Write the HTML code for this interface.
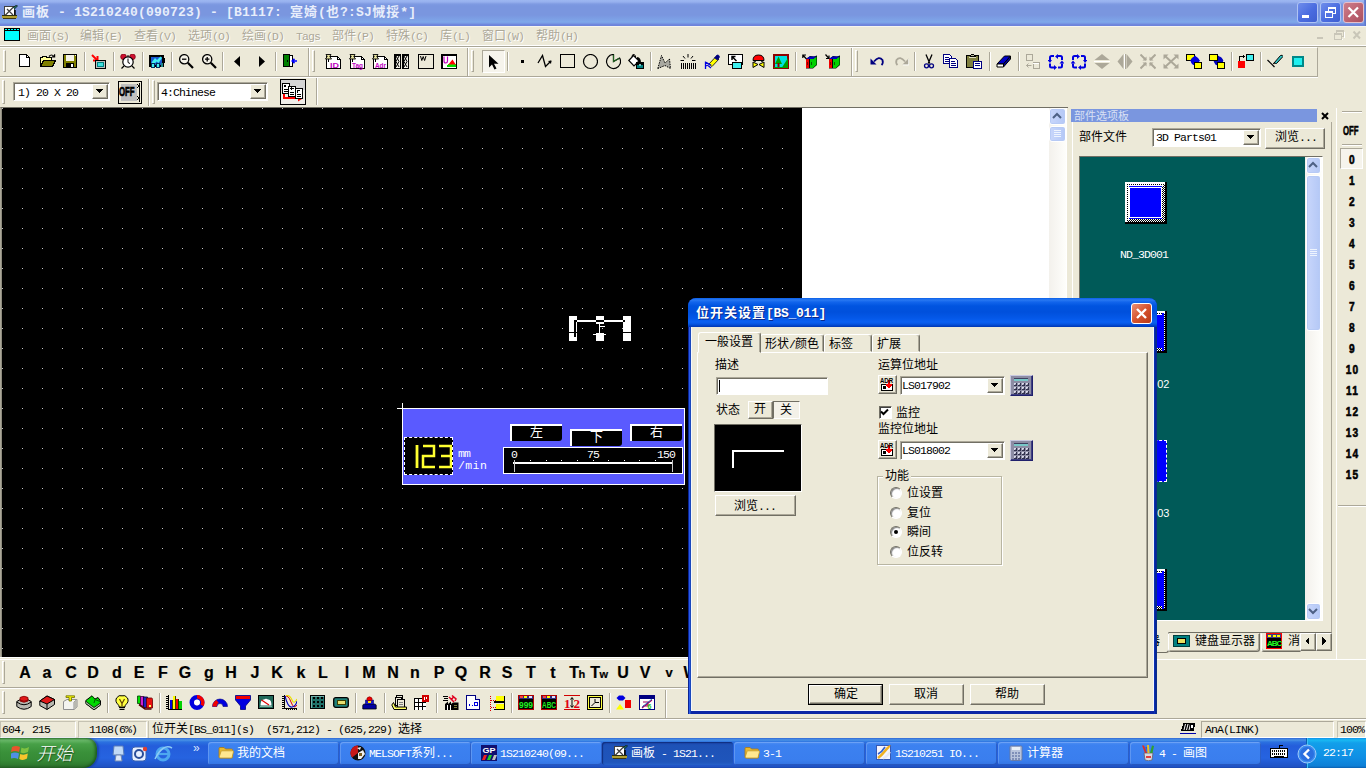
<!DOCTYPE html>
<html lang="zh"><head><meta charset="utf-8"><title>画板</title>
<style>
html,body{margin:0;padding:0}
body{width:1366px;height:768px;overflow:hidden;background:#ECE9D8;position:relative;font-family:"Liberation Mono","Noto Sans CJK SC",sans-serif;font-size:12px;color:#000}
.a{position:absolute;box-sizing:border-box}
.t{white-space:pre;line-height:14px;font-size:12px}
.l{font-family:"Liberation Mono",monospace;font-size:11.5px;letter-spacing:-0.9px}
.b{font-weight:bold}
.gray{color:#ACA899}
.btn{background:#ECE9D8;border:1px solid;border-color:#fff #716F64 #716F64 #fff;box-shadow:inset -1px -1px 0 #ACA899}
.sunk{border:1px solid;border-color:#ACA899 #fff #fff #ACA899;box-shadow:inset 1px 1px 0 #716F64;background:#fff}
.sep{width:2px;border-left:1px solid #ACA899;border-right:1px solid #fff}
.hsep{height:2px;border-top:1px solid #ACA899;border-bottom:1px solid #fff}
.ttl{letter-spacing:1px}
.ttl .l{font-size:13px;letter-spacing:0.2px}
.sans{font-family:"Liberation Sans","Noto Sans CJK SC",sans-serif}
.minl .l{letter-spacing:0.4px}
.ttl2 .l{font-size:13px;letter-spacing:-0.3px}

</style></head>
<body>
<div class="a " style="left:0px;top:0px;width:1366px;height:26px;background:linear-gradient(to bottom,#9DB7F1 0,#96B0EE 2px,#7F9BE2 4px,#7A96DF 6px,#7A96DF 15px,#7DA2E7 20px,#7EA8EA 22px,#7A9EE6 23px,#7088DD 24.5px,#6C82DA 26px)"></div>
<div class="a t ttl" style="left:22px;top:6px;color:#E8EEFB;font-size:13px;font-weight:bold;">画板<span class="l"> - 1S210240(090723) - [B1117: </span>寔婍<span class="l">(</span>也<span class="l">?:SJ</span>悈挼<span class="l">*]</span></div>
<svg class="a" style="left:2px;top:5px" width="16" height="16" viewBox="0 0 16 16" shape-rendering="crispEdges"><rect x="2.5" y="1.5" width="10" height="9" fill="#fff" stroke="#404040" stroke-width="1"/><g shape-rendering="auto"><path d="M3 10.5 L12 1.5 M5 4 L11 10" fill="none" stroke="#404040" stroke-width="1.2" /><path d="M11 2.5 L14.5 0 L15.5 1 L12.5 4" fill="#207060" stroke="#000" stroke-width="0.6" /><path d="M13 5 V10" fill="none" stroke="#000" stroke-width="1.4" /></g><rect x="0" y="11" width="15" height="2" fill="#B0A030"/><rect x="1" y="13" width="13" height="1" fill="#403810"/><rect x="0" y="10" width="15" height="1" fill="#303010"/></svg>
<div class="a " style="left:0px;top:26px;width:1366px;height:21px;background:#ECE9D8;border-top:1px solid #F6F5EE"></div>
<div class="a " style="left:0px;top:45px;width:1366px;height:1px;background:#fff"></div>
<div class="a " style="left:0px;top:46px;width:1366px;height:1px;background:#A9A696"></div>
<div class="a t " style="left:27px;top:30px;color:#ACA899;text-shadow:1px 1px 0 #fff">画面<span class="l">(S)</span></div>
<div class="a t " style="left:80px;top:30px;color:#ACA899;text-shadow:1px 1px 0 #fff">编辑<span class="l">(E)</span></div>
<div class="a t " style="left:134px;top:30px;color:#ACA899;text-shadow:1px 1px 0 #fff">查看<span class="l">(V)</span></div>
<div class="a t " style="left:188px;top:30px;color:#ACA899;text-shadow:1px 1px 0 #fff">选项<span class="l">(O)</span></div>
<div class="a t " style="left:242px;top:30px;color:#ACA899;text-shadow:1px 1px 0 #fff">绘画<span class="l">(D)</span></div>
<div class="a t " style="left:296px;top:30px;color:#ACA899;text-shadow:1px 1px 0 #fff"><span class="l">Tags</span></div>
<div class="a t " style="left:332px;top:30px;color:#ACA899;text-shadow:1px 1px 0 #fff">部件<span class="l">(P)</span></div>
<div class="a t " style="left:386px;top:30px;color:#ACA899;text-shadow:1px 1px 0 #fff">特殊<span class="l">(C)</span></div>
<div class="a t " style="left:440px;top:30px;color:#ACA899;text-shadow:1px 1px 0 #fff">库<span class="l">(L)</span></div>
<div class="a t " style="left:482px;top:30px;color:#ACA899;text-shadow:1px 1px 0 #fff">窗口<span class="l">(W)</span></div>
<div class="a t " style="left:536px;top:30px;color:#ACA899;text-shadow:1px 1px 0 #fff">帮助<span class="l">(H)</span></div>
<svg class="a" style="left:4px;top:28px" width="18" height="16" viewBox="0 0 18 16" shape-rendering="crispEdges" ><rect x="0" y="0" width="16" height="13" fill="#000"/><rect x="1" y="3" width="14" height="9" fill="#00FFFF"/><rect x="1" y="1" width="2" height="1" fill="#00FFFF"/><rect x="4" y="1" width="2" height="1" fill="#00FFFF"/><rect x="7" y="1" width="2" height="1" fill="#00FFFF"/><rect x="10" y="1" width="2" height="1" fill="#00FFFF"/><rect x="13" y="1" width="2" height="1" fill="#00FFFF"/></svg>
<svg class="a" style="left:1316px;top:36px" width="8" height="4" viewBox="0 0 8 4" shape-rendering="crispEdges" ><rect x="1" y="1" width="6" height="2" fill="#C9C6B8"/></svg>
<svg class="a" style="left:1333px;top:29px" width="12" height="11" viewBox="0 0 12 11" shape-rendering="crispEdges" ><rect x="3.5" y="1.5" width="7" height="6" fill="none" stroke="#C9C6B8" stroke-width="1"/><rect x="3" y="1" width="8" height="2" fill="#C9C6B8"/><rect x="1.5" y="4.5" width="7" height="6" fill="#ECE9D8" stroke="#C9C6B8" stroke-width="1"/><rect x="1" y="4" width="8" height="2" fill="#C9C6B8"/><rect x="11" y="3" width="1" height="6" fill="#fff"/><rect x="9" y="10" width="1" height="1" fill="#fff"/></svg>
<svg class="a" style="left:1352px;top:30px" width="10" height="10" viewBox="0 0 10 10" shape-rendering="crispEdges" ><path d="M1.5 1.5 L8 8.5 M8 1.5 L1.5 8.5" stroke="#C9C6B8" stroke-width="2" fill="none" shape-rendering="auto"/></svg>
<div class="a" style="left:1297px;top:2px;width:21px;height:21px;border:1px solid #AFC3F4;border-radius:3px;background:linear-gradient(135deg,#6F8DEB,#4A6CE0 55%,#3F5FD0)"></div>
<svg class="a" style="left:1297px;top:2px" width="21" height="21" viewBox="0 0 21 21" shape-rendering="crispEdges" ><rect x="5" y="13" width="7" height="3" fill="#fff"/></svg>
<div class="a" style="left:1320px;top:2px;width:21px;height:21px;border:1px solid #AFC3F4;border-radius:3px;background:linear-gradient(135deg,#6F8DEB,#4A6CE0 55%,#3F5FD0)"></div>
<svg class="a" style="left:1320px;top:2px" width="21" height="21" viewBox="0 0 21 21" shape-rendering="crispEdges" ><rect x="8.5" y="5.5" width="7" height="6" fill="none" stroke="#fff" stroke-width="1"/><rect x="8" y="5" width="8" height="2" fill="#fff"/><rect x="5.5" y="9.5" width="7" height="6" fill="#5474E2" stroke="#fff" stroke-width="1"/><rect x="5" y="9" width="8" height="2" fill="#fff"/></svg>
<div class="a" style="left:1343px;top:2px;width:21px;height:21px;border:1px solid #E6BFCB;border-radius:3px;background:linear-gradient(135deg,#CC7E8C,#BD6270 55%,#A85060)"></div>
<svg class="a" style="left:1343px;top:2px" width="21" height="21" viewBox="0 0 21 21" shape-rendering="crispEdges" ><path d="M5.5 5.5 L15 15 M15 5.5 L5.5 15" stroke="#fff" stroke-width="2.2" fill="none" shape-rendering="auto"/></svg>
<div class="a " style="left:1364px;top:0px;width:2px;height:26px;background:linear-gradient(to right,#6E8AD8,#5872C8)"></div>
<div class="a " style="left:0px;top:47px;width:1318px;height:30px;border-top:1px solid #fff;border-bottom:1px solid #ACA899;border-right:1px solid #ACA899"></div>
<div class="a " style="left:0px;top:77px;width:1318px;height:1px;background:#fff"></div>
<div class="a " style="left:3px;top:50px;width:3px;height:22px;border-left:1px solid #fff;border-top:1px solid #fff;border-right:1px solid #ACA899;border-bottom:1px solid #ACA899"></div>
<div class="a " style="left:482px;top:50px;width:23px;height:23px;border:1px solid;border-color:#ACA899 #fff #fff #ACA899;background:#F6F4EC"></div>
<svg class="a" style="left:19px;top:54px" width="16" height="16" viewBox="0 0 16 16" shape-rendering="crispEdges"><path d="M0.5 0.5 H7.5 L10.5 3.5 V12.5 H0.5 Z" fill="#fff" stroke="#000" stroke-width="1" /><path d="M7.5 0.5 V3.5 H10.5" fill="none" stroke="#000" stroke-width="1" /></svg>
<svg class="a" style="left:40px;top:54px" width="16" height="16" viewBox="0 0 16 16" shape-rendering="crispEdges"><path d="M0.5 12.5 V3.5 H2 L3 2.5 H6 L7 3.5 H11.5 V6" fill="#FFFF99" stroke="#000" stroke-width="1" /><path d="M0.5 12.5 L3.5 6.5 H15.5 L12.5 12.5 Z" fill="#808000" stroke="#000" stroke-width="1" /><g shape-rendering="auto"><path d="M9 2.5 Q11.5 -0.5 14 2.5" fill="none" stroke="#000" stroke-width="1.2" /><path d="M12 2.8 H14.6 V0.2" fill="none" stroke="#000" stroke-width="1.2" /></g></svg>
<svg class="a" style="left:63px;top:54px" width="16" height="16" viewBox="0 0 16 16" shape-rendering="crispEdges"><rect x="0.5" y="0.5" width="13" height="13" fill="#808000" stroke="#000" stroke-width="1"/><rect x="3" y="1" width="8" height="6" fill="#F4F2E8"/><rect x="3" y="9" width="8" height="4" fill="#000"/><rect x="8" y="10" width="2" height="3" fill="#fff"/><rect x="12" y="1" width="1" height="1" fill="#F4F2E8"/></svg>
<div class="a " style="left:84px;top:52px;width:2px;height:19px;border-left:1px solid #ACA899;border-right:1px solid #fff"></div>
<svg class="a" style="left:90px;top:54px" width="16" height="16" viewBox="0 0 16 16" shape-rendering="crispEdges"><g shape-rendering="auto"><path d="M2 1 L7 6" fill="none" stroke="#F00" stroke-width="2" /><path d="M3 6.5 H7.5 V2" fill="none" stroke="#F00" stroke-width="2" /></g><rect x="5.5" y="6.5" width="10" height="8" fill="#C0C0C0" stroke="#000" stroke-width="1"/><rect x="7.5" y="8.5" width="6" height="4" fill="#40E0E0" stroke="#008080" stroke-width="1"/></svg>
<div class="a " style="left:113px;top:52px;width:2px;height:19px;border-left:1px solid #ACA899;border-right:1px solid #fff"></div>
<svg class="a" style="left:120px;top:54px" width="16" height="16" viewBox="0 0 16 16" shape-rendering="crispEdges"><g shape-rendering="auto"><circle cx="3.5" cy="2.8" r="2.8" fill="#D01030" stroke="#800010" stroke-width="0.8"/><circle cx="12.5" cy="2.8" r="2.8" fill="#D01030" stroke="#800010" stroke-width="0.8"/><circle cx="8" cy="8" r="5.2" fill="#fff" stroke="#000" stroke-width="1.2"/><path d="M8 4.5 V8.5 L10 9.5" fill="none" stroke="#000" stroke-width="1" /><path d="M4 12 L1.5 14.5 M12 12 L14.5 14.5" fill="none" stroke="#000" stroke-width="1.2" /><path d="M8 1 V3" fill="none" stroke="#000" stroke-width="1" /></g></svg>
<div class="a " style="left:142px;top:52px;width:2px;height:19px;border-left:1px solid #ACA899;border-right:1px solid #fff"></div>
<svg class="a" style="left:149px;top:54px" width="16" height="16" viewBox="0 0 16 16" shape-rendering="crispEdges"><rect x="0.8" y="1.8" width="13.4" height="10.4" fill="#1858D0" stroke="#000" stroke-width="1.6"/><g shape-rendering="auto"><path d="M2.5 8.5 L6 4 L8 6 L11.5 2.5 L13 4 L9.5 9 L7.5 7.5 L5 10.5 Z" fill="#40F0F0" stroke="none" stroke-width="1" /></g><rect x="2.5" y="9.5" width="3" height="4" fill="#40F0F0" stroke="#003060" stroke-width="1"/><rect x="7.5" y="9.5" width="3" height="4" fill="#40F0F0" stroke="#003060" stroke-width="1"/><rect x="12" y="9" width="2" height="4" fill="#208888"/><rect x="15" y="4" width="1" height="5" fill="#000"/></svg>
<div class="a " style="left:171px;top:52px;width:2px;height:19px;border-left:1px solid #ACA899;border-right:1px solid #fff"></div>
<svg class="a" style="left:179px;top:54px" width="16" height="16" viewBox="0 0 16 16" shape-rendering="crispEdges"><g shape-rendering="auto"><circle cx="5.2" cy="5.2" r="4.6" fill="#F4F2E8" stroke="#000" stroke-width="1.3"/><path d="M8.8 8.8 L14 14" fill="none" stroke="#000" stroke-width="2.2" /><path d="M3 5.2 H7.4" fill="none" stroke="#000" stroke-width="1.3" /></g></svg>
<svg class="a" style="left:202px;top:54px" width="16" height="16" viewBox="0 0 16 16" shape-rendering="crispEdges"><g shape-rendering="auto"><circle cx="5.2" cy="5.2" r="4.6" fill="#F4F2E8" stroke="#000" stroke-width="1.3"/><path d="M8.8 8.8 L14 14" fill="none" stroke="#000" stroke-width="2.2" /><path d="M3 5.2 H7.4 M5.2 3 V7.4" fill="none" stroke="#000" stroke-width="1.3" /></g></svg>
<div class="a " style="left:222px;top:52px;width:2px;height:19px;border-left:1px solid #ACA899;border-right:1px solid #fff"></div>
<svg class="a" style="left:229px;top:54px" width="16" height="16" viewBox="0 0 16 16" shape-rendering="crispEdges"><g shape-rendering="auto"><polygon points="5,7.5 11,2 11,13" fill="#000" stroke="none" stroke-width="1"/></g></svg>
<svg class="a" style="left:255px;top:54px" width="16" height="16" viewBox="0 0 16 16" shape-rendering="crispEdges"><g shape-rendering="auto"><polygon points="10,7.5 4,2 4,13" fill="#000" stroke="none" stroke-width="1"/></g></svg>
<div class="a " style="left:275px;top:52px;width:2px;height:19px;border-left:1px solid #ACA899;border-right:1px solid #fff"></div>
<svg class="a" style="left:282px;top:54px" width="16" height="16" viewBox="0 0 16 16" shape-rendering="crispEdges"><rect x="1.5" y="0.5" width="6" height="12" fill="#008000" stroke="#000" stroke-width="1"/><path d="M8 1.5 H10.5 V12.5 H8" fill="#fff" stroke="#000" stroke-width="1" /><rect x="5" y="6" width="1" height="2" fill="#000"/><g shape-rendering="auto"><path d="M15 7 H10.5 M12.5 4.8 L10.2 7 L12.5 9.2" fill="none" stroke="#0000FF" stroke-width="1.6" /></g></svg>
<div class="a " style="left:308px;top:48px;width:2px;height:28px;border-left:1px solid #ACA899;border-right:1px solid #fff"></div>
<div class="a " style="left:312px;top:50px;width:3px;height:22px;border-left:1px solid #fff;border-top:1px solid #fff;border-right:1px solid #ACA899;border-bottom:1px solid #ACA899"></div>
<svg class="a" style="left:325px;top:54px" width="16" height="16" viewBox="0 0 16 16" shape-rendering="crispEdges"><path d="M1.5 2.5 H12.5 L15.5 5.5 V14.5 H1.5 Z" fill="#fff" stroke="#000" stroke-width="1" /><path d="M12.5 2.5 V5.5 H15.5" fill="none" stroke="#000" stroke-width="1" /><g shape-rendering="auto"><path d="M1 0.5 H6 L4.8 2.5 L6.5 5 H0.5 L2.2 2.5 Z" fill="#E8E4A0" stroke="#000" stroke-width="0.9" /><path d="M3.5 5 V8" fill="none" stroke="#000" stroke-width="1" /></g><text x="5" y="13.5" font-family="Liberation Sans, sans-serif" font-size="8" fill="#C000C0" font-weight="bold" textLength="9" lengthAdjust="spacingAndGlyphs">ID</text></svg>
<svg class="a" style="left:349px;top:54px" width="16" height="16" viewBox="0 0 16 16" shape-rendering="crispEdges"><path d="M1.5 2.5 H12.5 L15.5 5.5 V14.5 H1.5 Z" fill="#fff" stroke="#000" stroke-width="1" /><path d="M12.5 2.5 V5.5 H15.5" fill="none" stroke="#000" stroke-width="1" /><g shape-rendering="auto"><path d="M1 0.5 H6 L4.8 2.5 L6.5 5 H0.5 L2.2 2.5 Z" fill="#E8E4A0" stroke="#000" stroke-width="0.9" /><path d="M3.5 5 V8" fill="none" stroke="#000" stroke-width="1" /></g><text x="3" y="13.5" font-family="Liberation Sans, sans-serif" font-size="7" fill="#C000C0" font-weight="bold" textLength="11" lengthAdjust="spacingAndGlyphs">Tag</text></svg>
<svg class="a" style="left:372px;top:54px" width="16" height="16" viewBox="0 0 16 16" shape-rendering="crispEdges"><path d="M1.5 2.5 H12.5 L15.5 5.5 V14.5 H1.5 Z" fill="#fff" stroke="#000" stroke-width="1" /><path d="M12.5 2.5 V5.5 H15.5" fill="none" stroke="#000" stroke-width="1" /><g shape-rendering="auto"><path d="M1 0.5 H6 L4.8 2.5 L6.5 5 H0.5 L2.2 2.5 Z" fill="#E8E4A0" stroke="#000" stroke-width="0.9" /><path d="M3.5 5 V8" fill="none" stroke="#000" stroke-width="1" /></g><text x="3" y="13.5" font-family="Liberation Sans, sans-serif" font-size="7" fill="#C000C0" font-weight="bold" textLength="11" lengthAdjust="spacingAndGlyphs">Adr</text></svg>
<svg class="a" style="left:394px;top:54px" width="16" height="16" viewBox="0 0 16 16" shape-rendering="crispEdges"><rect x="0.75" y="0.75" width="5.5" height="13.5" fill="#F4F2E8" stroke="#000" stroke-width="1.5"/><g shape-rendering="auto"><path d="M2 2 L5 7.5 L2 13 M5 2 L2 7.5 L5 13" fill="none" stroke="#000" stroke-width="1" /></g><rect x="8.75" y="0.75" width="5.5" height="13.5" fill="#F4F2E8" stroke="#000" stroke-width="1.5"/><g shape-rendering="auto"><path d="M10 2 L13 7.5 L10 13 M13 2 L10 7.5 L13 13" fill="none" stroke="#000" stroke-width="1" /></g></svg>
<svg class="a" style="left:418px;top:54px" width="16" height="16" viewBox="0 0 16 16" shape-rendering="crispEdges"><rect x="0.65" y="0.65" width="14.7" height="13.7" fill="#ECE9D8" stroke="#000" stroke-width="1.3"/><g shape-rendering="auto"><path d="M2.5 2 L3.8 6.5 L5.2 2.5 L6.6 6.5 L8 2" fill="none" stroke="#000" stroke-width="1" /></g></svg>
<svg class="a" style="left:441px;top:54px" width="16" height="16" viewBox="0 0 16 16" shape-rendering="crispEdges"><rect x="0.75" y="0.75" width="14.5" height="13.5" fill="#fff" stroke="#000" stroke-width="1.5"/><g shape-rendering="auto"><path d="M3 2.5 V7 Q3 9 4.8 9 Q6.5 9 6.5 7 V2.5" fill="none" stroke="#C000C0" stroke-width="1.2" /><polygon points="7,11 11.5,5.5 15,11" fill="#F00" stroke="none" stroke-width="1"/></g><rect x="6" y="11" width="9" height="2" fill="#00E000"/><rect x="7" y="10" width="8" height="1" fill="#808000"/></svg>
<div class="a " style="left:467px;top:48px;width:2px;height:28px;border-left:1px solid #ACA899;border-right:1px solid #fff"></div>
<div class="a " style="left:471px;top:50px;width:3px;height:22px;border-left:1px solid #fff;border-top:1px solid #fff;border-right:1px solid #ACA899;border-bottom:1px solid #ACA899"></div>
<svg class="a" style="left:485px;top:54px" width="16" height="16" viewBox="0 0 16 16" shape-rendering="crispEdges"><g shape-rendering="auto"><polygon points="4,1 4,13.5 7,10.5 9.5,15.5 11.5,14.5 9,9.8 13.5,9.8" fill="#000" stroke="none" stroke-width="1"/></g></svg>
<div class="a " style="left:507px;top:52px;width:2px;height:19px;border-left:1px solid #ACA899;border-right:1px solid #fff"></div>
<svg class="a" style="left:514px;top:54px" width="16" height="16" viewBox="0 0 16 16" shape-rendering="crispEdges"><rect x="7" y="6" width="3" height="3" fill="#000"/></svg>
<svg class="a" style="left:537px;top:54px" width="16" height="16" viewBox="0 0 16 16" shape-rendering="crispEdges"><g shape-rendering="auto"><path d="M1 9 L5.5 1.5 L8.5 12.5 L14 7" fill="none" stroke="#000" stroke-width="1.3" /><polygon points="14.5,6.5 11,7 14,10" fill="#000" stroke="none" stroke-width="1"/></g></svg>
<svg class="a" style="left:559px;top:54px" width="16" height="16" viewBox="0 0 16 16" shape-rendering="crispEdges"><rect x="1.6" y="0.6" width="13.8" height="12.8" fill="none" stroke="#000" stroke-width="1.2"/></svg>
<svg class="a" style="left:582px;top:54px" width="16" height="16" viewBox="0 0 16 16" shape-rendering="crispEdges"><g shape-rendering="auto"><circle cx="8.5" cy="7.5" r="7" fill="none" stroke="#000" stroke-width="1.2"/></g></svg>
<svg class="a" style="left:605px;top:54px" width="16" height="16" viewBox="0 0 16 16" shape-rendering="crispEdges"><g shape-rendering="auto"><path d="M8.5 7.5 L8.5 0.5 A7 7 0 1 0 14.6 4 Z" fill="none" stroke="#000" stroke-width="1.2" /><path d="M8.5 0.8 V7.5 L14.4 4.2" fill="none" stroke="#206020" stroke-width="1.2" /></g></svg>
<svg class="a" style="left:628px;top:54px" width="16" height="16" viewBox="0 0 16 16" shape-rendering="crispEdges"><g shape-rendering="auto"><path d="M0.8 6.5 L5.5 1.5 L11 7 L6 12 Z" fill="#fff" stroke="#000" stroke-width="1.2" /><path d="M4 3 Q4 0 6 0.5 Q8 1 7.5 4" fill="none" stroke="#000" stroke-width="1" /><path d="M9 4 Q12 4.5 12 9" fill="none" stroke="#000" stroke-width="2" /></g><rect x="8.5" y="8.5" width="7" height="6" fill="#008080" stroke="#000" stroke-width="1"/><rect x="9" y="8" width="6" height="3" fill="#000"/><rect x="11" y="10" width="2" height="2" fill="#70C0C0"/></svg>
<div class="a " style="left:650px;top:52px;width:2px;height:19px;border-left:1px solid #ACA899;border-right:1px solid #fff"></div>
<svg class="a" style="left:657px;top:54px" width="16" height="16" viewBox="0 0 16 16" shape-rendering="crispEdges"><g shape-rendering="auto"><path d="M0.8 14.5 L4.5 1.5 L8 9 L12.5 5 L13.5 14.5 L8 11.5 Z" fill="#A8A8A0" stroke="#000" stroke-width="1" stroke-dasharray="1.5 1"/></g></svg>
<svg class="a" style="left:680px;top:54px" width="16" height="16" viewBox="0 0 16 16" shape-rendering="crispEdges"><rect x="1" y="9" width="1" height="6" fill="#000"/><rect x="3" y="9" width="1" height="6" fill="#000"/><rect x="5" y="9" width="1" height="6" fill="#000"/><rect x="7" y="9" width="1" height="6" fill="#000"/><rect x="9" y="9" width="1" height="6" fill="#000"/><rect x="11" y="9" width="1" height="6" fill="#000"/><rect x="13" y="9" width="1" height="6" fill="#000"/><rect x="15" y="9" width="1" height="6" fill="#000"/><g shape-rendering="auto"><path d="M8 0 V3.5 M3 2 L5 4.5 M13 2 L11 4.5 M0.5 6.5 H4 M12 6.5 H15.5" fill="none" stroke="#000" stroke-width="1" /></g></svg>
<svg class="a" style="left:704px;top:54px" width="16" height="16" viewBox="0 0 16 16" shape-rendering="crispEdges"><g shape-rendering="auto"><path d="M5 10 L12 2.5 L15 5 L8 12.5 Z" fill="#FFFF00" stroke="#000" stroke-width="0.8" /><path d="M10.5 4 L13 1 Q15 0.5 15.5 3 L13.5 6 Z" fill="#000080" stroke="#000080" stroke-width="0.8" /><path d="M1.5 15 V7.5 M1.5 8 L6 10.5 L1.5 12 M4 11.5 L7 14" fill="none" stroke="#0000E0" stroke-width="1.3" /></g></svg>
<svg class="a" style="left:728px;top:54px" width="16" height="16" viewBox="0 0 16 16" shape-rendering="crispEdges"><rect x="0.7" y="0.7" width="13.6" height="9.6" fill="#fff" stroke="#000" stroke-width="1.4"/><g shape-rendering="auto"><path d="M8.5 7 L4 2.5 M4 6 V2.5 H7.5" fill="none" stroke="#000" stroke-width="1.5" /></g><rect x="4.6" y="8.6" width="8.8" height="5.8" fill="#40F0F0" stroke="#000" stroke-width="1.2"/></svg>
<svg class="a" style="left:751px;top:54px" width="16" height="16" viewBox="0 0 16 16" shape-rendering="crispEdges"><g shape-rendering="auto"><path d="M2 6.5 Q2 1 7.5 1 Q13 1 13 6.5 Z" fill="#F00" stroke="#000" stroke-width="1" /><path d="M2 8 L7 10.5 L2 13.5 Z M13 8 L8 10.5 L13 13.5 Z" fill="#FFFF00" stroke="#000" stroke-width="1" /><path d="M4 6.5 V8 M11 6.5 V8" fill="none" stroke="#000" stroke-width="1.5" /></g></svg>
<svg class="a" style="left:773px;top:54px" width="16" height="16" viewBox="0 0 16 16" shape-rendering="crispEdges"><rect x="0.8" y="0.8" width="14.4" height="13.4" fill="#00E0E0" stroke="#900000" stroke-width="1.6"/><g shape-rendering="auto"><polygon points="9,13.5 15,4 15,13.5" fill="#00A000" stroke="none" stroke-width="1"/><polygon points="2,10 5.5,2.5 9,10" fill="#00A000" stroke="none" stroke-width="1"/><rect x="4.5" y="9" width="2" height="4.5" fill="#900000"/></g><rect x="1" y="13" width="14" height="1" fill="#00A000"/></svg>
<div class="a " style="left:795px;top:52px;width:2px;height:19px;border-left:1px solid #ACA899;border-right:1px solid #fff"></div>
<svg class="a" style="left:802px;top:54px" width="16" height="16" viewBox="0 0 16 16" shape-rendering="crispEdges"><g shape-rendering="auto"><polygon points="4,5 8,2 12,2.5 15,1.5 15,11 11,14.5 4,14.5" fill="#000" stroke="none" stroke-width="1"/></g><rect x="4" y="5" width="3" height="9" fill="#F00000"/><rect x="8" y="5" width="3" height="9" fill="#00D000"/><g shape-rendering="auto"><polygon points="11,5 14.5,2.5 14.5,10.5 11,14" fill="#00D000" stroke="none" stroke-width="1"/><polygon points="4,5 7.5,2.5 14.5,2.5 11,5" fill="#0000C0" stroke="none" stroke-width="1"/></g><rect x="7" y="5" width="1" height="9" fill="#000"/><rect x="5" y="8" width="1" height="3" fill="#800000"/><rect x="9" y="8" width="1" height="3" fill="#006000"/><g shape-rendering="auto"><path d="M4.5 5 L0.8 1 M0.8 4 V1 H4" fill="none" stroke="#000" stroke-width="1.2" /></g></svg>
<svg class="a" style="left:825px;top:54px" width="16" height="16" viewBox="0 0 16 16" shape-rendering="crispEdges"><g shape-rendering="auto"><polygon points="4,5 8,2 12,2.5 15,1.5 15,11 11,14.5 4,14.5" fill="#000" stroke="none" stroke-width="1"/></g><rect x="4" y="5" width="3" height="9" fill="#F00000"/><rect x="8" y="5" width="3" height="9" fill="#00D000"/><g shape-rendering="auto"><polygon points="11,5 14.5,2.5 14.5,10.5 11,14" fill="#00D000" stroke="none" stroke-width="1"/><polygon points="4,5 7.5,2.5 14.5,2.5 11,5" fill="#0000C0" stroke="none" stroke-width="1"/></g><rect x="7" y="5" width="1" height="9" fill="#000"/><rect x="5" y="8" width="1" height="3" fill="#800000"/><rect x="9" y="8" width="1" height="3" fill="#006000"/><g shape-rendering="auto"><path d="M0.5 0.5 L4 4.5 M1 4.5 H4 V1.5" fill="none" stroke="#000" stroke-width="1.2" /></g></svg>
<div class="a " style="left:851px;top:48px;width:2px;height:28px;border-left:1px solid #ACA899;border-right:1px solid #fff"></div>
<div class="a " style="left:855px;top:50px;width:3px;height:22px;border-left:1px solid #fff;border-top:1px solid #fff;border-right:1px solid #ACA899;border-bottom:1px solid #ACA899"></div>
<svg class="a" style="left:870px;top:54px" width="16" height="16" viewBox="0 0 16 16" shape-rendering="crispEdges"><g shape-rendering="auto"><path d="M4 7.5 Q9 1.5 12.5 6 Q13.5 9 11.5 11" fill="none" stroke="#000080" stroke-width="1.8" /><polygon points="0.5,4.5 0.5,10.5 6.5,10.5" fill="#000080" stroke="none" stroke-width="1"/></g></svg>
<svg class="a" style="left:893px;top:54px" width="16" height="16" viewBox="0 0 16 16" shape-rendering="crispEdges"><g shape-rendering="auto"><path d="M12 7.5 Q7 1.5 3.5 6 Q2.5 9 4.5 11" fill="none" stroke="#ACA899" stroke-width="1.8" /><polygon points="15.5,4.5 15.5,10.5 9.5,10.5" fill="#ACA899" stroke="none" stroke-width="1"/><path d="M15.8 5 V11 H10" fill="none" stroke="#fff" stroke-width="0.8" /></g></svg>
<div class="a " style="left:914px;top:52px;width:2px;height:19px;border-left:1px solid #ACA899;border-right:1px solid #fff"></div>
<svg class="a" style="left:921px;top:54px" width="16" height="16" viewBox="0 0 16 16" shape-rendering="crispEdges"><g shape-rendering="auto"><path d="M5 0.5 L8.8 9.5 M11 0.5 L7.2 9.5" fill="none" stroke="#000" stroke-width="1.3" /><circle cx="5.5" cy="11.8" r="2" fill="none" stroke="#000080" stroke-width="1.3"/><circle cx="10.5" cy="11.8" r="2" fill="none" stroke="#000080" stroke-width="1.3"/></g></svg>
<svg class="a" style="left:943px;top:54px" width="16" height="16" viewBox="0 0 16 16" shape-rendering="crispEdges"><path d="M0.5 0.5 H6.5 L8.5 2.5 V9.5 H0.5 Z" fill="#fff" stroke="#000080" stroke-width="1" /><rect x="2" y="3" width="4" height="1" fill="#000080"/><rect x="2" y="5" width="5" height="1" fill="#000080"/><rect x="2" y="7" width="5" height="1" fill="#000080"/><path d="M6.5 4.5 H12.5 L14.5 6.5 V13.5 H6.5 Z" fill="#fff" stroke="#000080" stroke-width="1" /><rect x="8" y="7" width="4" height="1" fill="#000080"/><rect x="8" y="9" width="5" height="1" fill="#000080"/><rect x="8" y="11" width="5" height="1" fill="#000080"/></svg>
<svg class="a" style="left:966px;top:54px" width="16" height="16" viewBox="0 0 16 16" shape-rendering="crispEdges"><rect x="0.5" y="1.5" width="12" height="12" fill="#808040" stroke="#000" stroke-width="1"/><path d="M4 2.5 V1.5 L5.5 0.5 H7.5 L9 1.5 V2.5 Z" fill="#C0C0A0" stroke="#000" stroke-width="1" /><rect x="3" y="3" width="7" height="1" fill="#E0E0C0"/><rect x="7.5" y="7.5" width="8" height="7" fill="#fff" stroke="#000080" stroke-width="1"/><rect x="9" y="9" width="5" height="1" fill="#000080"/><rect x="9" y="11" width="5" height="1" fill="#000080"/></svg>
<div class="a " style="left:989px;top:52px;width:2px;height:19px;border-left:1px solid #ACA899;border-right:1px solid #fff"></div>
<svg class="a" style="left:996px;top:54px" width="16" height="16" viewBox="0 0 16 16" shape-rendering="crispEdges"><g shape-rendering="auto"><path d="M1 10 L8.5 2 H14.5 L7.5 10 Z" fill="#0000C8" stroke="#000" stroke-width="1" /><path d="M1 10 H7.5 V13 H1 Z" fill="#fff" stroke="#000" stroke-width="1" /><path d="M7.5 13 L14.5 5 V2 L7.5 10 Z" fill="#0000A0" stroke="#000" stroke-width="1" /></g></svg>
<div class="a " style="left:1018px;top:52px;width:2px;height:19px;border-left:1px solid #ACA899;border-right:1px solid #fff"></div>
<svg class="a" style="left:1025px;top:54px" width="16" height="16" viewBox="0 0 16 16" shape-rendering="crispEdges"><rect x="1.5" y="0.5" width="6" height="6" fill="none" stroke="#ACA899" stroke-width="1"/><rect x="8.5" y="8.5" width="6" height="6" fill="none" stroke="#ACA899" stroke-width="1"/><rect x="8" y="9" width="6" height="1" fill="#fff"/><g shape-rendering="auto"><path d="M6.5 11.5 H1.5 M3.5 9.5 L1.5 11.5 L3.5 13.5" fill="none" stroke="#ACA899" stroke-width="1" /></g></svg>
<svg class="a" style="left:1048px;top:54px" width="16" height="16" viewBox="0 0 16 16" shape-rendering="crispEdges"><g transform="translate(16,0) scale(-1,1)"><g shape-rendering="auto"><path d="M6 2 H3.5 Q2 2 2 3.5 V6 M10 2 H12.5 Q14 2 14 3.5 V6 M2 9.5 V12 Q2 13.5 3.5 13.5 H6 M14 9.5 V12 Q14 13.5 12.5 13.5 H10" fill="none" stroke="#0000E0" stroke-width="2" /><polygon points="6,0 6,5 9,2.5" fill="#0000E0" stroke="none" stroke-width="1"/><polygon points="10,11 10,16 7,13.5" fill="#0000E0" stroke="none" stroke-width="1"/><polygon points="12,6 16.5,6 14,9" fill="#0000E0" stroke="none" stroke-width="1"/><polygon points="-0.5,9.5 4.5,9.5 2,6.5" fill="#0000E0" stroke="none" stroke-width="1"/></g></g></svg>
<svg class="a" style="left:1071px;top:54px" width="16" height="16" viewBox="0 0 16 16" shape-rendering="crispEdges"><g shape-rendering="auto"><path d="M6 2 H3.5 Q2 2 2 3.5 V6 M10 2 H12.5 Q14 2 14 3.5 V6 M2 9.5 V12 Q2 13.5 3.5 13.5 H6 M14 9.5 V12 Q14 13.5 12.5 13.5 H10" fill="none" stroke="#0000E0" stroke-width="2" /><polygon points="6,0 6,5 9,2.5" fill="#0000E0" stroke="none" stroke-width="1"/><polygon points="10,11 10,16 7,13.5" fill="#0000E0" stroke="none" stroke-width="1"/><polygon points="12,6 16.5,6 14,9" fill="#0000E0" stroke="none" stroke-width="1"/><polygon points="-0.5,9.5 4.5,9.5 2,6.5" fill="#0000E0" stroke="none" stroke-width="1"/></g></svg>
<svg class="a" style="left:1094px;top:54px" width="16" height="16" viewBox="0 0 16 16" shape-rendering="crispEdges"><g shape-rendering="auto"><polygon points="0.5,6 8,0 15.5,6" fill="#ACA899" stroke="none" stroke-width="1"/><polygon points="0.5,9 8,15 15.5,9" fill="#ACA899" stroke="none" stroke-width="1"/></g><rect x="0" y="7" width="16" height="1" fill="#fff"/></svg>
<svg class="a" style="left:1117px;top:54px" width="16" height="16" viewBox="0 0 16 16" shape-rendering="crispEdges"><g shape-rendering="auto"><polygon points="6.5,0 0.5,7.5 6.5,15" fill="#ACA899" stroke="none" stroke-width="1"/><polygon points="9.5,0 15.5,7.5 9.5,15" fill="#ACA899" stroke="none" stroke-width="1"/></g><rect x="7" y="0" width="1" height="15" fill="#fff"/><rect x="8" y="0" width="1" height="15" fill="#ACA899"/></svg>
<svg class="a" style="left:1140px;top:54px" width="16" height="16" viewBox="0 0 16 16" shape-rendering="crispEdges"><g shape-rendering="auto"><path d="M0.5 0.5 L6 6 M15.5 0.5 L10 6 M0.5 14.5 L6 9 M15.5 14.5 L10 9" fill="none" stroke="#ACA899" stroke-width="2" /><polygon points="2.5,6.5 6.5,6.5 6.5,2.5" fill="#ACA899" stroke="none" stroke-width="1"/><polygon points="13.5,6.5 9.5,6.5 9.5,2.5" fill="#ACA899" stroke="none" stroke-width="1"/><polygon points="2.5,8.5 6.5,8.5 6.5,12.5" fill="#ACA899" stroke="none" stroke-width="1"/><polygon points="13.5,8.5 9.5,8.5 9.5,12.5" fill="#ACA899" stroke="none" stroke-width="1"/></g></svg>
<svg class="a" style="left:1163px;top:54px" width="16" height="16" viewBox="0 0 16 16" shape-rendering="crispEdges"><g shape-rendering="auto"><path d="M2 2 L14 13 M14 2 L2 13" fill="none" stroke="#ACA899" stroke-width="2" /><polygon points="0.5,0.5 5.5,0.5 0.5,5.5" fill="#ACA899" stroke="none" stroke-width="1"/><polygon points="15.5,0.5 10.5,0.5 15.5,5.5" fill="#ACA899" stroke="none" stroke-width="1"/><polygon points="0.5,14.5 5.5,14.5 0.5,9.5" fill="#ACA899" stroke="none" stroke-width="1"/><polygon points="15.5,14.5 10.5,14.5 15.5,9.5" fill="#ACA899" stroke="none" stroke-width="1"/></g></svg>
<svg class="a" style="left:1186px;top:54px" width="16" height="16" viewBox="0 0 16 16" shape-rendering="crispEdges"><rect x="0.6" y="0.6" width="7.8" height="5.8" fill="#FFFF00" stroke="#000" stroke-width="1.2"/><g shape-rendering="auto"><polygon points="9,1.5 14,6.5 9,12 4,6.5" fill="#0000E0" stroke="none" stroke-width="1"/><circle cx="9" cy="7" r="4.2" fill="#0000E0" stroke="none" stroke-width="1"/></g><rect x="8.6" y="8.6" width="6.8" height="5.8" fill="#FFFF00" stroke="#000" stroke-width="1.2"/></svg>
<svg class="a" style="left:1209px;top:54px" width="16" height="16" viewBox="0 0 16 16" shape-rendering="crispEdges"><g shape-rendering="auto"><polygon points="9,1.5 14.5,6.5 9,12 4,6.5" fill="#000080" stroke="none" stroke-width="1"/><circle cx="9.5" cy="7" r="4.5" fill="#0000C0" stroke="none" stroke-width="1"/></g><rect x="0.6" y="0.6" width="7.8" height="5.8" fill="#FFFF00" stroke="#000" stroke-width="1.2"/><rect x="8.6" y="8.6" width="6.8" height="5.8" fill="#FFFF00" stroke="#000" stroke-width="1.2"/></svg>
<div class="a " style="left:1231px;top:52px;width:2px;height:19px;border-left:1px solid #ACA899;border-right:1px solid #fff"></div>
<svg class="a" style="left:1238px;top:54px" width="16" height="16" viewBox="0 0 16 16" shape-rendering="crispEdges"><rect x="0" y="7" width="7" height="7" fill="#F00"/><rect x="8.6" y="0.6" width="6.8" height="5.8" fill="#40F0F0" stroke="#000" stroke-width="1.2"/><path d="M1.5 6.5 V2.5 H5" fill="none" stroke="#000" stroke-width="1.4" /><polygon points="4.5,0.5 7,2.5 4.5,4.5" fill="#000" stroke="none" stroke-width="1"/></svg>
<div class="a " style="left:1260px;top:52px;width:2px;height:19px;border-left:1px solid #ACA899;border-right:1px solid #fff"></div>
<svg class="a" style="left:1267px;top:54px" width="16" height="16" viewBox="0 0 16 16" shape-rendering="crispEdges"><g shape-rendering="auto"><path d="M0.5 6 L7.5 13" fill="none" stroke="#000" stroke-width="1.2" /><path d="M7 9 L13.5 1.5 Q15.5 0.5 16 2.5 L9.5 9.5 Z" fill="#30C8C8" stroke="#000" stroke-width="1" /><path d="M7 9 L6.5 10" fill="none" stroke="#000" stroke-width="1.4" /></g></svg>
<svg class="a" style="left:1290px;top:54px" width="16" height="16" viewBox="0 0 16 16" shape-rendering="crispEdges"><rect x="3.0" y="3.0" width="10" height="9" fill="#20F0F0" stroke="#008888" stroke-width="2"/></svg>
<div class="a " style="left:0px;top:78px;width:1366px;height:30px;"></div>
<div class="a " style="left:2px;top:80px;width:3px;height:24px;border-left:1px solid #fff;border-top:1px solid #fff;border-right:1px solid #ACA899;border-bottom:1px solid #ACA899"></div>
<div class="a sunk" style="left:13px;top:82px;width:97px;height:19px;"></div>
<div class="a t " style="left:18px;top:86px;"><span class="l">1) 20 X 20</span></div>
<div class="a btn" style="left:92px;top:84px;width:16px;height:15px;"></div>
<svg class="a" style="left:96px;top:89px" width="7" height="4" viewBox="0 0 7 4" shape-rendering="crispEdges" ><polygon points="0,0 7,0 3.5,4" fill="#000" stroke="none" stroke-width="1"/></svg>
<div class="a " style="left:118px;top:81px;width:24px;height:23px;border:1px solid #000;background:#ECE9D8"></div>
<div class="a " style="left:121px;top:84px;width:16px;height:17px;background:#C0C0C0"></div>
<div class="a t sans" style="left:119px;top:85px;font-weight:bold;font-size:13px;-webkit-text-stroke:0.7px #000;transform:scaleX(.6);transform-origin:0 0">OFF</div>
<svg class="a" style="left:136px;top:83px" width="5" height="19" viewBox="0 0 5 19" shape-rendering="crispEdges" ><polyline points="1,1 3,3 1,5" fill="none" stroke="#000" stroke-width="1" /><polyline points="1,13 3,15 1,17" fill="none" stroke="#000" stroke-width="1" /><rect x="3" y="0" width="1" height="19" fill="#000"/></svg>
<div class="a " style="left:148px;top:79px;width:2px;height:27px;border-left:1px solid #ACA899;border-right:1px solid #fff"></div>
<div class="a " style="left:152px;top:80px;width:3px;height:24px;border-left:1px solid #fff;border-top:1px solid #fff;border-right:1px solid #ACA899;border-bottom:1px solid #ACA899"></div>
<div class="a sunk" style="left:157px;top:82px;width:111px;height:19px;"></div>
<div class="a t " style="left:161px;top:86px;"><span class="l">4:Chinese</span></div>
<div class="a btn" style="left:250px;top:84px;width:16px;height:15px;"></div>
<svg class="a" style="left:254px;top:89px" width="7" height="4" viewBox="0 0 7 4" shape-rendering="crispEdges" ><polygon points="0,0 7,0 3.5,4" fill="#000" stroke="none" stroke-width="1"/></svg>
<div class="a " style="left:280px;top:79px;width:26px;height:26px;border:1px solid #000;background:linear-gradient(to bottom,#D4D4D4 0,#D4D4D4 10px,#F0EEE8 10px)"></div>
<svg class="a" style="left:282px;top:82px" width="22" height="21" viewBox="0 0 22 21" shape-rendering="crispEdges" ><path d="M2 9 V16 H18" stroke="#F00" stroke-width="2" fill="none"/><path d="M16 12.5 L21.5 16 L16 19.5 Z" fill="#F00" shape-rendering="auto"/><rect x="0.7" y="1.7" width="6.6" height="9.6" fill="#fff" stroke="#000" stroke-width="1.4"/><rect x="6.7" y="4.7" width="6.6" height="9.6" fill="#fff" stroke="#000" stroke-width="1.4"/><rect x="13.7" y="6.7" width="6.6" height="9.6" fill="#fff" stroke="#000" stroke-width="1.4"/><rect x="2" y="3" width="2" height="2" fill="#000"/><rect x="2" y="7" width="4" height="1" fill="#000"/><rect x="2" y="9" width="4" height="1" fill="#000"/><rect x="8" y="6" width="4" height="1" fill="#000"/><rect x="9" y="5" width="1" height="3" fill="#000"/><rect x="8" y="10" width="4" height="1" fill="#000"/><rect x="8" y="12" width="4" height="1" fill="#000"/><rect x="15" y="8" width="3" height="1" fill="#000"/><rect x="15" y="8" width="1" height="3" fill="#000"/><rect x="15" y="12" width="4" height="1" fill="#000"/><rect x="15" y="14" width="4" height="1" fill="#000"/></svg>
<div class="a " style="left:316px;top:78px;width:2px;height:27px;border-left:1px solid #ACA899;border-right:1px solid #fff"></div>
<div class="a " style="left:0px;top:107px;width:1068px;height:552px;border-top:1px solid #716F64;border-left:1px solid #ACA899;background:#fff"></div>
<div class="a " style="left:1px;top:108px;width:1px;height:550px;background:#8E8C7E"></div>
<svg class="a" style="left:2px;top:108px" width="800" height="549" shape-rendering="crispEdges"><defs><pattern id="gd" width="20" height="20" patternUnits="userSpaceOnUse"><rect width="1" height="1" fill="#C8C8C8"/></pattern></defs><rect width="800" height="549" fill="#000"/><rect width="800" height="549" fill="url(#gd)"/></svg>
<div class="a " style="left:802px;top:108px;width:247px;height:549px;background:#fff"></div>
<div class="a " style="left:1049px;top:108px;width:17px;height:549px;background:linear-gradient(to right,#F3F1EC,#FEFEFB)"></div>
<div class="a " style="left:1049px;top:108px;width:17px;height:17px;border:1px solid #fff;border-radius:3px;background:linear-gradient(to right,#C8D6FB,#B4C8F6);box-shadow:inset 0 0 0 1px #B7CAF5"></div>
<svg class="a" style="left:1052px;top:112px" width="11" height="9" viewBox="0 0 11 9" shape-rendering="crispEdges" ><polyline points="1,6 5,2 9,6" fill="none" stroke="#4D6185" stroke-width="2" shape-rendering="auto"/></svg>
<div class="a " style="left:1049px;top:126px;width:17px;height:16px;border:1px solid #fff;border-radius:3px;background:linear-gradient(to right,#C8D6FB,#B4C8F6);box-shadow:inset 0 0 0 1px #B7CAF5"></div>
<svg class="a" style="left:1054px;top:130px" width="8" height="8" viewBox="0 0 8 8" shape-rendering="crispEdges" ><rect x="0" y="0" width="7" height="1" fill="#EEF4FE"/><rect x="0" y="2" width="7" height="1" fill="#EEF4FE"/><rect x="0" y="4" width="7" height="1" fill="#EEF4FE"/><rect x="0" y="6" width="7" height="1" fill="#EEF4FE"/></svg>
<div class="a " style="left:1067px;top:108px;width:5px;height:552px;background:#ECE9D8"></div>
<div class="a " style="left:0px;top:657px;width:1068px;height:2px;background:#ECE9D8;border-top:1px solid #fff"></div>
<div class="a " style="left:402px;top:408px;width:283px;height:77px;background:#5A5AFF;border:1px solid #fff"></div>
<div class="a " style="left:397px;top:408px;width:6px;height:1px;background:#fff"></div>
<div class="a " style="left:402px;top:403px;width:1px;height:6px;background:#fff"></div>
<div class="a " style="left:404px;top:437px;width:49px;height:38px;background:#000;border:1px dashed #fff"></div>
<svg class="a" style="left:405px;top:438px" width="47" height="36" viewBox="0 0 47 36" shape-rendering="crispEdges" ><g fill="none" stroke="#FFFF30" stroke-width="2.5" shape-rendering="auto"><path d="M12 7 V30" stroke-width="2.8"/><path d="M18 8 H29 V18 H18 V29 H30"/><path d="M34 8 H46 V29 H34 M36 18 H46"/></g></svg>
<div class="a t " style="left:458px;top:447px;color:#fff;font-size:11px;letter-spacing:1px"><span class="l">mm</span></div>
<div class="a t minl" style="left:458px;top:459px;color:#fff;font-size:11px;"><span class="l">/min</span></div>
<div class="a " style="left:510px;top:424px;width:52px;height:17px;background:#000;border-top:2px solid #fff;border-left:2px solid #fff;border-radius:0 0 3px 0"></div>
<div class="a t " style="left:530px;top:426px;color:#fff;font-size:13px;line-height:14px">左</div>
<div class="a " style="left:570px;top:429px;width:52px;height:17px;background:#000;border-top:2px solid #fff;border-left:2px solid #fff;border-radius:0 0 3px 0"></div>
<div class="a t " style="left:590px;top:431px;color:#fff;font-size:13px;line-height:14px">下</div>
<div class="a " style="left:630px;top:424px;width:52px;height:17px;background:#000;border-top:2px solid #fff;border-left:2px solid #fff;border-radius:0 0 3px 0"></div>
<div class="a t " style="left:650px;top:426px;color:#fff;font-size:13px;line-height:14px">右</div>
<div class="a " style="left:503px;top:447px;width:180px;height:27px;background:#000;border:1px solid #fff"></div>
<div class="a t " style="left:511px;top:448px;color:#fff;font-size:11px"><span class="l">0</span></div>
<div class="a t " style="left:587px;top:448px;color:#fff;font-size:11px"><span class="l">75</span></div>
<div class="a t " style="left:657px;top:448px;color:#fff;font-size:11px"><span class="l">150</span></div>
<div class="a " style="left:513px;top:462px;width:160px;height:2px;background:#fff"></div>
<div class="a " style="left:514px;top:460px;width:1px;height:12px;background:#C8C8C8"></div>
<div class="a " style="left:672px;top:460px;width:1px;height:12px;background:#C8C8C8"></div>
<svg class="a" style="left:515px;top:460px" width="158" height="3" viewBox="0 0 158 3" shape-rendering="crispEdges" ><rect x="15" y="0" width="1" height="1" fill="#fff"/><rect x="31" y="0" width="1" height="1" fill="#fff"/><rect x="46" y="0" width="1" height="1" fill="#fff"/><rect x="62" y="0" width="1" height="1" fill="#fff"/><rect x="78" y="0" width="1" height="1" fill="#fff"/><rect x="93" y="0" width="1" height="1" fill="#fff"/><rect x="109" y="0" width="1" height="1" fill="#fff"/><rect x="124" y="0" width="1" height="1" fill="#fff"/><rect x="140" y="0" width="1" height="1" fill="#fff"/></svg>
<div class="a " style="left:569px;top:316px;width:8px;height:8px;background:#fff"></div>
<div class="a " style="left:569px;top:333px;width:8px;height:8px;background:#fff"></div>
<div class="a " style="left:596px;top:316px;width:8px;height:8px;background:#fff"></div>
<div class="a " style="left:596px;top:333px;width:8px;height:8px;background:#fff"></div>
<div class="a " style="left:623px;top:316px;width:8px;height:8px;background:#fff"></div>
<div class="a " style="left:623px;top:333px;width:8px;height:8px;background:#fff"></div>
<div class="a " style="left:569px;top:324px;width:8px;height:8px;background:#fff"></div>
<div class="a " style="left:623px;top:324px;width:8px;height:8px;background:#fff"></div>
<div class="a " style="left:577px;top:320px;width:19px;height:2px;background:#fff"></div>
<div class="a " style="left:604px;top:320px;width:19px;height:2px;background:#fff"></div>
<div class="a " style="left:596px;top:320px;width:8px;height:2px;background:#000"></div>
<div class="a " style="left:574px;top:320px;width:2px;height:17px;background:#000"></div>
<div class="a " style="left:574px;top:320px;width:3px;height:2px;background:#000"></div>
<div class="a " style="left:623px;top:320px;width:2px;height:2px;background:#000"></div>
<svg class="a" style="left:592px;top:322px" width="16" height="14" viewBox="0 0 16 14" shape-rendering="crispEdges" ><polyline points="7.5,0 7.5,11" fill="none" stroke="#fff" stroke-width="1" /><polyline points="7,4 13,4" fill="none" stroke="#fff" stroke-width="1" /><polyline points="1,12 14,12" fill="none" stroke="#fff" stroke-width="1" /></svg>
<div class="a " style="left:1071px;top:109px;width:246px;height:13px;background:#7A96DF"></div>
<div class="a t " style="left:1074px;top:111px;color:#D8E0F4;font-size:11px;line-height:13px;">部件选项板</div>
<svg class="a" style="left:1321px;top:112px" width="9" height="9" viewBox="0 0 9 9" shape-rendering="crispEdges" ><path d="M1 1 L7 7 M7 1 L1 7" stroke="#000" stroke-width="2" fill="none" shape-rendering="auto"/></svg>
<div class="a " style="left:1072px;top:122px;width:260px;height:511px;border-right:1px solid #ACA899;border-bottom:1px solid #716F64;border-left:1px solid #fff"></div>
<div class="a t " style="left:1079px;top:131px;">部件文件</div>
<div class="a sunk" style="left:1152px;top:128px;width:109px;height:19px;"></div>
<div class="a t " style="left:1156px;top:131px;"><span class="l">3D Parts01</span></div>
<div class="a btn" style="left:1243px;top:130px;width:16px;height:15px;"></div>
<svg class="a" style="left:1247px;top:135px" width="7" height="4" viewBox="0 0 7 4" shape-rendering="crispEdges" ><polygon points="0,0 7,0 3.5,4" fill="#000" stroke="none" stroke-width="1"/></svg>
<div class="a btn" style="left:1265px;top:128px;width:60px;height:21px;"></div>
<div class="a t " style="left:1275px;top:131px;">浏览<span class="l">...</span></div>
<div class="a " style="left:1079px;top:156px;width:244px;height:465px;border:1px solid;border-color:#716F64 #fff #fff #716F64"></div>
<div class="a " style="left:1080px;top:157px;width:225px;height:463px;background:#005A58"></div>
<div class="a " style="left:1305px;top:157px;width:17px;height:463px;background:linear-gradient(to right,#F3F1EC,#FEFEFB)"></div>
<div class="a " style="left:1306px;top:157px;width:15px;height:17px;border:1px solid #fff;border-radius:3px;background:linear-gradient(to right,#C8D6FB,#B4C8F6);box-shadow:inset 0 0 0 1px #B7CAF5"></div>
<svg class="a" style="left:1308px;top:161px" width="11" height="9" viewBox="0 0 11 9" shape-rendering="crispEdges" ><polyline points="1,6 5,2 9,6" fill="none" stroke="#4D6185" stroke-width="2" shape-rendering="auto"/></svg>
<div class="a " style="left:1306px;top:603px;width:15px;height:17px;border:1px solid #fff;border-radius:3px;background:linear-gradient(to right,#C8D6FB,#B4C8F6);box-shadow:inset 0 0 0 1px #B7CAF5"></div>
<svg class="a" style="left:1308px;top:607px" width="11" height="9" viewBox="0 0 11 9" shape-rendering="crispEdges" ><polyline points="1,2 5,6 9,2" fill="none" stroke="#4D6185" stroke-width="2" shape-rendering="auto"/></svg>
<div class="a " style="left:1306px;top:175px;width:15px;height:156px;border:1px solid #fff;border-radius:3px;background:linear-gradient(to right,#C8D6FB,#B4C8F6);box-shadow:inset 0 0 0 1px #B7CAF5"></div>
<svg class="a" style="left:1310px;top:249px" width="8" height="8" viewBox="0 0 8 8" shape-rendering="crispEdges" ><rect x="0" y="0" width="7" height="1" fill="#EEF4FE"/><rect x="0" y="2" width="7" height="1" fill="#EEF4FE"/><rect x="0" y="4" width="7" height="1" fill="#EEF4FE"/><rect x="0" y="6" width="7" height="1" fill="#EEF4FE"/></svg>
<svg class="a" style="left:0;top:0" width="0" height="0"><defs><pattern id="ck" width="2" height="2" patternUnits="userSpaceOnUse"><rect width="2" height="2" fill="#fff"/><rect width="1" height="1" fill="#000"/><rect x="1" y="1" width="1" height="1" fill="#000"/></pattern></defs></svg>
<svg class="a" style="left:1125px;top:182px" width="42" height="42" viewBox="0 0 42 42" shape-rendering="crispEdges" ><rect x="0" y="0" width="42" height="42" fill="#000"/><rect x="0" y="0" width="40" height="40" fill="#fff"/><rect x="2" y="2" width="38" height="38" fill="url(#ck)"/><rect x="3" y="3" width="1" height="35" fill="#fff"/><rect x="3" y="3" width="35" height="1" fill="#fff"/><rect x="4" y="4" width="33" height="33" fill="#0000FF"/><rect x="4.5" y="5.5" width="32" height="30" fill="none" stroke="#fff" stroke-width="1"/></svg>
<svg class="a" style="left:1125px;top:311px" width="42" height="42" viewBox="0 0 42 42" shape-rendering="crispEdges" ><rect x="0" y="0" width="42" height="42" fill="#000"/><rect x="0" y="0" width="40" height="40" fill="#fff"/><rect x="2" y="2" width="38" height="38" fill="url(#ck)"/><rect x="3" y="3" width="1" height="35" fill="#fff"/><rect x="3" y="3" width="35" height="1" fill="#fff"/><rect x="4" y="4" width="33" height="33" fill="#0000FF"/><rect x="37" y="2" width="2" height="38" fill="#0000FF"/><rect x="39" y="2" width="1" height="38" fill="url(#ck)"/></svg>
<div class="a " style="left:1125px;top:440px;width:42px;height:42px;background:#0000FF;border:1px dashed #fff"></div>
<svg class="a" style="left:1125px;top:569px" width="42" height="42" viewBox="0 0 42 42" shape-rendering="crispEdges" ><rect x="0" y="0" width="42" height="42" fill="#000"/><rect x="0" y="0" width="40" height="40" fill="#fff"/><rect x="2" y="2" width="38" height="38" fill="url(#ck)"/><rect x="3" y="3" width="1" height="35" fill="#fff"/><rect x="3" y="3" width="35" height="1" fill="#fff"/><rect x="4" y="4" width="33" height="33" fill="#0000FF"/><rect x="37" y="2" width="2" height="38" fill="#0000FF"/><rect x="39" y="2" width="1" height="38" fill="url(#ck)"/></svg>
<div class="a t " style="left:1120px;top:248px;color:#fff"><span class="l">ND_3D001</span></div>
<div class="a t sans" style="left:1115px;top:377px;color:#fff;font-size:11px">ND_3D002</div>
<div class="a t sans" style="left:1115px;top:506px;color:#fff;font-size:11px">ND_3D003</div>
<div class="a " style="left:1078px;top:632px;width:91px;height:21px;background:#ECE9D8;border:1px solid;border-color:#ECE9D8 #716F64 #716F64 #fff;border-radius:0 0 3px 3px"></div>
<div class="a t " style="left:1148px;top:635px;">器</div>
<div class="a " style="left:1168px;top:633px;width:92px;height:19px;border:1px solid;border-color:transparent #716F64 #716F64 #fff;border-radius:0 0 3px 3px;box-shadow:inset -1px -1px 0 #ACA899"></div>
<svg class="a" style="left:1173px;top:634px" width="18" height="14" viewBox="0 0 18 14" shape-rendering="crispEdges" ><rect x="0.5" y="1.5" width="16" height="11" fill="#008080" stroke="#003C3C" stroke-width="1"/><rect x="4.5" y="4.5" width="8" height="5" fill="#E8E060" stroke="#000" stroke-width="1"/></svg>
<div class="a t " style="left:1195px;top:635px;">键盘显示器</div>
<div class="a " style="left:1261px;top:633px;width:40px;height:19px;border:1px solid;border-color:transparent transparent #716F64 #fff;border-radius:0 0 0 3px;box-shadow:inset 0 -1px 0 #ACA899"></div>
<svg class="a" style="left:1266px;top:633px" width="17" height="16" viewBox="0 0 17 16" shape-rendering="crispEdges" ><rect x="0.5" y="0.5" width="15" height="15" fill="#000" stroke="#F00" stroke-width="1"/><rect x="1" y="1" width="14" height="4" fill="#404080"/><rect x="2" y="2" width="3" height="2" fill="#FF0"/><rect x="7" y="2" width="3" height="2" fill="#FF0"/><rect x="11" y="2" width="3" height="2" fill="#FF0"/></svg>
<div class="a t sans" style="left:1267px;top:640px;color:#20FF20;font-size:8px;line-height:8px;letter-spacing:-1px;font-weight:bold">ABC</div>
<div class="a t " style="left:1288px;top:635px;">消</div>
<div class="a btn" style="left:1300px;top:633px;width:16px;height:18px;"></div>
<div class="a btn" style="left:1316px;top:633px;width:16px;height:18px;"></div>
<svg class="a" style="left:1305px;top:637px" width="5" height="9" viewBox="0 0 5 9" shape-rendering="crispEdges" ><polygon points="4,0 4,8 0,4" fill="#000" stroke="none" stroke-width="1"/></svg>
<svg class="a" style="left:1322px;top:637px" width="5" height="9" viewBox="0 0 5 9" shape-rendering="crispEdges" ><polygon points="0,0 0,8 4,4" fill="#000" stroke="none" stroke-width="1"/></svg>
<div class="a " style="left:1336px;top:108px;width:30px;height:552px;border-left:1px solid #fff"></div>
<div class="a " style="left:1342px;top:111px;width:20px;height:2px;border-top:1px solid #ACA899;border-bottom:1px solid #fff"></div>
<div class="a t sans" style="left:1343px;top:124px;font-weight:bold;font-size:13px;-webkit-text-stroke:0.6px #000;transform:scaleX(.6);transform-origin:0 0">OFF</div>
<div class="a " style="left:1342px;top:144px;width:20px;height:2px;border-top:1px solid #ACA899;border-bottom:1px solid #fff"></div>
<div class="a " style="left:1340px;top:148px;width:23px;height:21px;border:1px solid;border-color:#ACA899 #fff #fff #ACA899;background:#F6F4EC"></div>
<div class="a t sans" style="left:1342px;top:153px;width:21px;text-align:center;font-weight:bold;font-size:13px;letter-spacing:1.5px;-webkit-text-stroke:0.6px #000;transform:scaleX(.78)">0</div>
<div class="a t sans" style="left:1342px;top:174px;width:21px;text-align:center;font-weight:bold;font-size:13px;letter-spacing:1.5px;-webkit-text-stroke:0.6px #000;transform:scaleX(.78)">1</div>
<div class="a t sans" style="left:1342px;top:195px;width:21px;text-align:center;font-weight:bold;font-size:13px;letter-spacing:1.5px;-webkit-text-stroke:0.6px #000;transform:scaleX(.78)">2</div>
<div class="a t sans" style="left:1342px;top:216px;width:21px;text-align:center;font-weight:bold;font-size:13px;letter-spacing:1.5px;-webkit-text-stroke:0.6px #000;transform:scaleX(.78)">3</div>
<div class="a t sans" style="left:1342px;top:237px;width:21px;text-align:center;font-weight:bold;font-size:13px;letter-spacing:1.5px;-webkit-text-stroke:0.6px #000;transform:scaleX(.78)">4</div>
<div class="a t sans" style="left:1342px;top:258px;width:21px;text-align:center;font-weight:bold;font-size:13px;letter-spacing:1.5px;-webkit-text-stroke:0.6px #000;transform:scaleX(.78)">5</div>
<div class="a t sans" style="left:1342px;top:279px;width:21px;text-align:center;font-weight:bold;font-size:13px;letter-spacing:1.5px;-webkit-text-stroke:0.6px #000;transform:scaleX(.78)">6</div>
<div class="a t sans" style="left:1342px;top:300px;width:21px;text-align:center;font-weight:bold;font-size:13px;letter-spacing:1.5px;-webkit-text-stroke:0.6px #000;transform:scaleX(.78)">7</div>
<div class="a t sans" style="left:1342px;top:321px;width:21px;text-align:center;font-weight:bold;font-size:13px;letter-spacing:1.5px;-webkit-text-stroke:0.6px #000;transform:scaleX(.78)">8</div>
<div class="a t sans" style="left:1342px;top:342px;width:21px;text-align:center;font-weight:bold;font-size:13px;letter-spacing:1.5px;-webkit-text-stroke:0.6px #000;transform:scaleX(.78)">9</div>
<div class="a t sans" style="left:1342px;top:363px;width:21px;text-align:center;font-weight:bold;font-size:13px;letter-spacing:1.5px;-webkit-text-stroke:0.6px #000;transform:scaleX(.78)">10</div>
<div class="a t sans" style="left:1342px;top:384px;width:21px;text-align:center;font-weight:bold;font-size:13px;letter-spacing:1.5px;-webkit-text-stroke:0.6px #000;transform:scaleX(.78)">11</div>
<div class="a t sans" style="left:1342px;top:405px;width:21px;text-align:center;font-weight:bold;font-size:13px;letter-spacing:1.5px;-webkit-text-stroke:0.6px #000;transform:scaleX(.78)">12</div>
<div class="a t sans" style="left:1342px;top:426px;width:21px;text-align:center;font-weight:bold;font-size:13px;letter-spacing:1.5px;-webkit-text-stroke:0.6px #000;transform:scaleX(.78)">13</div>
<div class="a t sans" style="left:1342px;top:447px;width:21px;text-align:center;font-weight:bold;font-size:13px;letter-spacing:1.5px;-webkit-text-stroke:0.6px #000;transform:scaleX(.78)">14</div>
<div class="a t sans" style="left:1342px;top:468px;width:21px;text-align:center;font-weight:bold;font-size:13px;letter-spacing:1.5px;-webkit-text-stroke:0.6px #000;transform:scaleX(.78)">15</div>
<div class="a " style="left:1338px;top:505px;width:28px;height:2px;border-top:1px solid #ACA899;border-bottom:1px solid #fff"></div>
<div class="a " style="left:0px;top:659px;width:1366px;height:1px;background:#fff"></div>
<div class="a " style="left:2px;top:661px;width:3px;height:23px;border-left:1px solid #fff;border-top:1px solid #fff;border-right:1px solid #ACA899;border-bottom:1px solid #ACA899"></div>
<div class="a t sans" style="left:12px;top:664px;width:26px;text-align:center;font-weight:bold;font-size:16px;line-height:18px;-webkit-text-stroke:0.2px #000;">A</div>
<div class="a t sans" style="left:34px;top:664px;width:26px;text-align:center;font-weight:bold;font-size:16px;line-height:18px;-webkit-text-stroke:0.2px #000;">a</div>
<div class="a t sans" style="left:58px;top:664px;width:26px;text-align:center;font-weight:bold;font-size:16px;line-height:18px;-webkit-text-stroke:0.2px #000;">C</div>
<div class="a t sans" style="left:80px;top:664px;width:26px;text-align:center;font-weight:bold;font-size:16px;line-height:18px;-webkit-text-stroke:0.2px #000;">D</div>
<div class="a t sans" style="left:104px;top:664px;width:26px;text-align:center;font-weight:bold;font-size:16px;line-height:18px;-webkit-text-stroke:0.2px #000;">d</div>
<div class="a t sans" style="left:126px;top:664px;width:26px;text-align:center;font-weight:bold;font-size:16px;line-height:18px;-webkit-text-stroke:0.2px #000;">E</div>
<div class="a t sans" style="left:150px;top:664px;width:26px;text-align:center;font-weight:bold;font-size:16px;line-height:18px;-webkit-text-stroke:0.2px #000;">F</div>
<div class="a t sans" style="left:172px;top:664px;width:26px;text-align:center;font-weight:bold;font-size:16px;line-height:18px;-webkit-text-stroke:0.2px #000;">G</div>
<div class="a t sans" style="left:196px;top:664px;width:26px;text-align:center;font-weight:bold;font-size:16px;line-height:18px;-webkit-text-stroke:0.2px #000;">g</div>
<div class="a t sans" style="left:218px;top:664px;width:26px;text-align:center;font-weight:bold;font-size:16px;line-height:18px;-webkit-text-stroke:0.2px #000;">H</div>
<div class="a t sans" style="left:242px;top:664px;width:26px;text-align:center;font-weight:bold;font-size:16px;line-height:18px;-webkit-text-stroke:0.2px #000;">J</div>
<div class="a t sans" style="left:264px;top:664px;width:26px;text-align:center;font-weight:bold;font-size:16px;line-height:18px;-webkit-text-stroke:0.2px #000;">K</div>
<div class="a t sans" style="left:288px;top:664px;width:26px;text-align:center;font-weight:bold;font-size:16px;line-height:18px;-webkit-text-stroke:0.2px #000;">k</div>
<div class="a t sans" style="left:310px;top:664px;width:26px;text-align:center;font-weight:bold;font-size:16px;line-height:18px;-webkit-text-stroke:0.2px #000;">L</div>
<div class="a t sans" style="left:334px;top:664px;width:26px;text-align:center;font-weight:bold;font-size:16px;line-height:18px;-webkit-text-stroke:0.2px #000;">l</div>
<div class="a t sans" style="left:356px;top:664px;width:26px;text-align:center;font-weight:bold;font-size:16px;line-height:18px;-webkit-text-stroke:0.2px #000;">M</div>
<div class="a t sans" style="left:380px;top:664px;width:26px;text-align:center;font-weight:bold;font-size:16px;line-height:18px;-webkit-text-stroke:0.2px #000;">N</div>
<div class="a t sans" style="left:402px;top:664px;width:26px;text-align:center;font-weight:bold;font-size:16px;line-height:18px;-webkit-text-stroke:0.2px #000;">n</div>
<div class="a t sans" style="left:426px;top:664px;width:26px;text-align:center;font-weight:bold;font-size:16px;line-height:18px;-webkit-text-stroke:0.2px #000;">P</div>
<div class="a t sans" style="left:448px;top:664px;width:26px;text-align:center;font-weight:bold;font-size:16px;line-height:18px;-webkit-text-stroke:0.2px #000;">Q</div>
<div class="a t sans" style="left:472px;top:664px;width:26px;text-align:center;font-weight:bold;font-size:16px;line-height:18px;-webkit-text-stroke:0.2px #000;">R</div>
<div class="a t sans" style="left:494px;top:664px;width:26px;text-align:center;font-weight:bold;font-size:16px;line-height:18px;-webkit-text-stroke:0.2px #000;">S</div>
<div class="a t sans" style="left:518px;top:664px;width:26px;text-align:center;font-weight:bold;font-size:16px;line-height:18px;-webkit-text-stroke:0.2px #000;">T</div>
<div class="a t sans" style="left:540px;top:664px;width:26px;text-align:center;font-weight:bold;font-size:16px;line-height:18px;-webkit-text-stroke:0.2px #000;">t</div>
<div class="a t sans" style="left:564px;top:664px;width:26px;text-align:center;font-weight:bold;font-size:16px;line-height:18px;-webkit-text-stroke:0.2px #000;letter-spacing:-0.5px">T<span style="font-size:11px">h</span></div>
<div class="a t sans" style="left:586px;top:664px;width:26px;text-align:center;font-weight:bold;font-size:16px;line-height:18px;-webkit-text-stroke:0.2px #000;letter-spacing:-0.5px">T<span style="font-size:11px">w</span></div>
<div class="a t sans" style="left:610px;top:664px;width:26px;text-align:center;font-weight:bold;font-size:16px;line-height:18px;-webkit-text-stroke:0.2px #000;">U</div>
<div class="a t sans" style="left:632px;top:664px;width:26px;text-align:center;font-weight:bold;font-size:16px;line-height:18px;-webkit-text-stroke:0.2px #000;">V</div>
<div class="a t sans" style="left:656px;top:664px;width:26px;text-align:center;font-weight:bold;font-size:16px;line-height:18px;-webkit-text-stroke:0.2px #000;font-size:13px;">v</div>
<div class="a t sans" style="left:678px;top:664px;width:26px;text-align:center;font-weight:bold;font-size:16px;line-height:18px;-webkit-text-stroke:0.2px #000;">W</div>
<div class="a " style="left:0px;top:687px;width:688px;height:2px;border-top:1px solid #ACA899;border-bottom:1px solid #fff"></div>
<div class="a " style="left:2px;top:691px;width:3px;height:23px;border-left:1px solid #fff;border-top:1px solid #fff;border-right:1px solid #ACA899;border-bottom:1px solid #ACA899"></div>
<svg class="a" style="left:16px;top:695px" width="16" height="16" viewBox="0 0 16 16" shape-rendering="crispEdges"><g shape-rendering="auto"><path d="M0.8 6.5 V11.5 Q8 17 15.2 11.5 V6.5 Q8 1 0.8 6.5 Z" fill="#B8B8B0" stroke="#000" stroke-width="1" /><path d="M0.8 7 Q8 12.5 15.2 7" fill="none" stroke="#000" stroke-width="1" /><path d="M4 2.5 V6 Q8 8.5 12 6 V2.5 Q8 0 4 2.5 Z" fill="#E01818" stroke="#800000" stroke-width="0.8" /><path d="M4 5 Q8 7.5 12 5" fill="none" stroke="#800000" stroke-width="0.8" /></g></svg>
<svg class="a" style="left:39px;top:695px" width="16" height="16" viewBox="0 0 16 16" shape-rendering="crispEdges"><g shape-rendering="auto"><path d="M0.8 6 L8 1 L15.5 4.5 V9.5 L8 14.5 L0.8 10.5 Z" fill="#B8B8B0" stroke="#000" stroke-width="1" /><path d="M0.8 6 L8 1 L15.5 4.5 L8 9 Z" fill="#E01818" stroke="#000" stroke-width="1" /><path d="M8 9 V14.5" fill="none" stroke="#000" stroke-width="1" /></g></svg>
<svg class="a" style="left:62px;top:695px" width="16" height="16" viewBox="0 0 16 16" shape-rendering="crispEdges"><g shape-rendering="auto"><path d="M1.5 6.5 L5 4.5 H15 V12 L12 14.5 H1.5 Z" fill="#F4F4F0" stroke="#909090" stroke-width="1" /><path d="M12 14.5 V7 L15 4.5" fill="none" stroke="#909090" stroke-width="1" /><path d="M12 14.5 L15 12 V4.5 L12 7 Z" fill="#B8B8B0" stroke="none" stroke-width="1" /><path d="M4 0.8 H12.5 V2.5 H9.5 V6 H7 V2.5 H4 Z" fill="#F0F000" stroke="#707000" stroke-width="0.8" /></g></svg>
<svg class="a" style="left:85px;top:695px" width="16" height="16" viewBox="0 0 16 16" shape-rendering="crispEdges"><g shape-rendering="auto"><path d="M0.8 5.5 L7 0.8 L10 4 L13 2.5 L15.5 6 V10 L9 14.8 L0.8 8.5 Z" fill="#00D800" stroke="#000" stroke-width="1" /><path d="M0.8 8.5 L9 14.8 L15.5 10 V8 L9 12.5 L1 6.5" fill="#B8C8B0" stroke="#000" stroke-width="0.8" /><path d="M7 1 L10 4.5 L9 8 M10 4.5 L15 6.5" fill="none" stroke="#006000" stroke-width="1" /></g></svg>
<div class="a " style="left:107px;top:693px;width:2px;height:20px;border-left:1px solid #ACA899;border-right:1px solid #fff"></div>
<svg class="a" style="left:114px;top:695px" width="16" height="16" viewBox="0 0 16 16" shape-rendering="crispEdges"><g shape-rendering="auto"><path d="M5 10.5 Q0.5 7 2.5 3 Q5 -0.5 8 0.8 Q11 -0.5 13.5 3 Q15.5 7 11 10.5 V12 H5 Z" fill="#FFFF40" stroke="#000" stroke-width="1" /><path d="M5.5 4 L8 8.5 L10.5 4 M8 8.5 V11" fill="none" stroke="#604000" stroke-width="1.2" /><path d="M5 12.5 H11 M5.5 14.3 H10.5" fill="none" stroke="#000" stroke-width="1.2" /></g></svg>
<svg class="a" style="left:137px;top:695px" width="16" height="16" viewBox="0 0 16 16" shape-rendering="crispEdges"><g shape-rendering="auto"><path d="M0.5 1 H3.5 V8.5 H0.5 Z" fill="#00E000" stroke="#004000" stroke-width="0.8" /><path d="M3.5 1.5 H7 V11 H3.5 Z" fill="#D020D0" stroke="#400040" stroke-width="0.8" /><path d="M6.5 2 H10.5 V12.5 H6.5 Z" fill="#2020C0" stroke="#000040" stroke-width="0.8" /><path d="M9.5 3 H14.5 Q15.5 3 15.5 4.5 V13 H9.5 Z" fill="#E81010" stroke="#600000" stroke-width="0.8" /><path d="M2 9.5 L8 14 H14.5" fill="none" stroke="#500000" stroke-width="1.6" /></g><rect x="12" y="10" width="2" height="2" fill="#FFFF60"/></svg>
<div class="a " style="left:159px;top:693px;width:2px;height:20px;border-left:1px solid #ACA899;border-right:1px solid #fff"></div>
<svg class="a" style="left:166px;top:695px" width="16" height="16" viewBox="0 0 16 16" shape-rendering="crispEdges"><rect x="2" y="0" width="1" height="15" fill="#000"/><rect x="2" y="14" width="14" height="1" fill="#000"/><rect x="0" y="1" width="2" height="1" fill="#000"/><rect x="0" y="3" width="2" height="1" fill="#000"/><rect x="0" y="5" width="2" height="1" fill="#000"/><rect x="0" y="7" width="2" height="1" fill="#000"/><rect x="0" y="9" width="2" height="1" fill="#000"/><rect x="0" y="11" width="2" height="1" fill="#000"/><rect x="0" y="13" width="2" height="1" fill="#000"/><rect x="4" y="5" width="3" height="9" fill="#0000E0"/><rect x="7" y="1" width="3" height="13" fill="#FFFF00"/><rect x="10" y="4" width="3" height="10" fill="#F00000"/><rect x="13" y="6" width="3" height="8" fill="#00D000"/><rect x="6" y="5" width="1" height="9" fill="#404000"/><rect x="9" y="1" width="1" height="13" fill="#404000"/><rect x="12" y="4" width="1" height="10" fill="#004000"/></svg>
<svg class="a" style="left:189px;top:695px" width="16" height="16" viewBox="0 0 16 16" shape-rendering="crispEdges"><g shape-rendering="auto"><circle cx="8" cy="7.5" r="5.2" fill="none" stroke="#0000E0" stroke-width="4.6"/><path d="M8 0 A7.5 7.5 0 0 1 14.5 11.2 L11.5 9.5 A4 4 0 0 0 8 3.5 Z" fill="#F00000" stroke="none" stroke-width="1" /><circle cx="8" cy="7.5" r="2.8" fill="#fff" stroke="none" stroke-width="1"/></g></svg>
<svg class="a" style="left:212px;top:695px" width="16" height="16" viewBox="0 0 16 16" shape-rendering="crispEdges"><g shape-rendering="auto"><path d="M0.5 11.5 A7.5 7.5 0 0 1 15.5 11.5 H11 A3 3 0 0 0 5 11.5 Z" fill="#0000E0" stroke="#000080" stroke-width="0.6" /><path d="M0.5 11.5 A7.5 7.5 0 0 1 4.5 5 L6.8 8 A3 3 0 0 0 5 11.5 Z" fill="#F00000" stroke="none" stroke-width="1" /></g></svg>
<svg class="a" style="left:235px;top:695px" width="16" height="16" viewBox="0 0 16 16" shape-rendering="crispEdges"><g shape-rendering="auto"><path d="M0.5 0.5 H15.5 V5 L10.5 11 V14.5 H5.5 V11 L0.5 5 Z" fill="#0000E0" stroke="#000080" stroke-width="0.8" /></g><rect x="1" y="1" width="14" height="3" fill="#F00000"/></svg>
<svg class="a" style="left:258px;top:695px" width="16" height="16" viewBox="0 0 16 16" shape-rendering="crispEdges"><rect x="0.6" y="0.6" width="14.8" height="12.8" fill="#206858" stroke="#000" stroke-width="1.2"/><g shape-rendering="auto"><path d="M2.5 10.5 Q2.5 4 6 4.5 Q8 3 10 4.5 Q13.5 4 13.5 10.5 Z" fill="#fff" stroke="none" stroke-width="1" /><path d="M3.5 5 L11 10" fill="none" stroke="#E00000" stroke-width="1.2" /></g><rect x="2" y="11" width="12" height="1" fill="#80B0A0"/></svg>
<svg class="a" style="left:281px;top:695px" width="16" height="16" viewBox="0 0 16 16" shape-rendering="crispEdges"><rect x="3" y="0" width="1" height="14" fill="#000"/><rect x="3" y="13" width="13" height="1" fill="#000"/><rect x="1" y="1" width="2" height="1" fill="#000"/><rect x="1" y="3" width="2" height="1" fill="#000"/><rect x="1" y="5" width="2" height="1" fill="#000"/><rect x="1" y="7" width="2" height="1" fill="#000"/><rect x="1" y="9" width="2" height="1" fill="#000"/><rect x="1" y="11" width="2" height="1" fill="#000"/><rect x="1" y="13" width="2" height="1" fill="#000"/><rect x="5" y="14" width="1" height="1" fill="#000"/><rect x="7" y="14" width="1" height="1" fill="#000"/><rect x="9" y="14" width="1" height="1" fill="#000"/><rect x="11" y="14" width="1" height="1" fill="#000"/><rect x="13" y="14" width="1" height="1" fill="#000"/><rect x="15" y="14" width="1" height="1" fill="#000"/><g shape-rendering="auto"><path d="M4 2 Q7 -1 10 7 T16 10" fill="none" stroke="#E00000" stroke-width="1" /><path d="M4 1 Q7 13 11 12 T16 6" fill="none" stroke="#0000C0" stroke-width="1.1" /><path d="M5 0.5 Q9 0 11 5 T16 4" fill="none" stroke="#E8E000" stroke-width="1.2" /></g></svg>
<div class="a " style="left:303px;top:693px;width:2px;height:20px;border-left:1px solid #ACA899;border-right:1px solid #fff"></div>
<svg class="a" style="left:310px;top:695px" width="16" height="16" viewBox="0 0 16 16" shape-rendering="crispEdges"><rect x="0.6" y="0.6" width="13.8" height="12.8" fill="#207068" stroke="#000" stroke-width="1.2"/><rect x="3" y="2" width="2" height="2" fill="#000"/><rect x="3" y="6" width="2" height="2" fill="#000"/><rect x="3" y="10" width="2" height="2" fill="#000"/><rect x="7" y="2" width="2" height="2" fill="#000"/><rect x="7" y="6" width="2" height="2" fill="#000"/><rect x="7" y="10" width="2" height="2" fill="#000"/><rect x="11" y="2" width="2" height="2" fill="#000"/><rect x="11" y="6" width="2" height="2" fill="#000"/><rect x="11" y="10" width="2" height="2" fill="#000"/><path d="M1.5 13 V1.5 H14" fill="none" stroke="#70B0A8" stroke-width="1" /></svg>
<svg class="a" style="left:333px;top:695px" width="16" height="16" viewBox="0 0 16 16" shape-rendering="crispEdges"><g shape-rendering="auto"><rect x="0.7" y="2.7" width="14.6" height="9.6" rx="2" fill="#208078" stroke="#000" stroke-width="1.3"/></g><rect x="4.5" y="5.5" width="8" height="4" fill="#E8E070" stroke="#404000" stroke-width="1"/></svg>
<div class="a " style="left:355px;top:693px;width:2px;height:20px;border-left:1px solid #ACA899;border-right:1px solid #fff"></div>
<svg class="a" style="left:362px;top:695px" width="16" height="16" viewBox="0 0 16 16" shape-rendering="crispEdges"><g shape-rendering="auto"><path d="M0.8 14 V10.5 Q0.8 9 3 9 H12 Q14.2 9 14.2 10.5 V14 Z" fill="#0000A0" stroke="#000" stroke-width="0.8" /><path d="M3.5 9 V5 H11.5 V9" fill="#1818C0" stroke="#000080" stroke-width="0.6" /><path d="M5 5.5 V3 Q7.5 0.5 10 3 V5.5 Z" fill="#F00000" stroke="#800000" stroke-width="0.6" /><path d="M6 6 H9 V8 H6 Z" fill="#FFE000" stroke="none" stroke-width="1" /></g></svg>
<div class="a " style="left:384px;top:693px;width:2px;height:20px;border-left:1px solid #ACA899;border-right:1px solid #fff"></div>
<svg class="a" style="left:391px;top:695px" width="16" height="16" viewBox="0 0 16 16" shape-rendering="crispEdges"><path d="M5.5 0.5 H11.5 V9 H5.5 Z" fill="#ECE9D8" stroke="#000" stroke-width="1" /><path d="M4.5 2.5 H10.5 V10 H4.5 Z" fill="#ECE9D8" stroke="#000" stroke-width="1" /><path d="M6.5 4.5 H13.5 V12 H6.5 Z" fill="#ECE9D8" stroke="#000" stroke-width="1" /><rect x="8" y="7" width="4" height="1" fill="#808080"/><rect x="8" y="9" width="4" height="1" fill="#808080"/><g shape-rendering="auto"><path d="M2.5 7.5 L0.8 10 L3 14.5 H15.5 V12 H4.5 L2.5 7.5" fill="#FFFF60" stroke="#000" stroke-width="1" /></g></svg>
<svg class="a" style="left:414px;top:695px" width="16" height="16" viewBox="0 0 16 16" shape-rendering="crispEdges"><rect x="0" y="3" width="12" height="12" fill="#000"/><rect x="1" y="4" width="3" height="3" fill="#fff"/><rect x="1" y="8" width="3" height="3" fill="#fff"/><rect x="1" y="12" width="3" height="3" fill="#fff"/><rect x="5" y="4" width="3" height="3" fill="#fff"/><rect x="5" y="8" width="3" height="3" fill="#fff"/><rect x="5" y="12" width="3" height="3" fill="#fff"/><rect x="9" y="4" width="3" height="3" fill="#fff"/><rect x="9" y="8" width="3" height="3" fill="#fff"/><rect x="9" y="12" width="3" height="3" fill="#fff"/><rect x="8.8" y="0.8" width="5.4" height="5.4" fill="#fff" stroke="#D00000" stroke-width="1.6"/><path d="M11.5 2 V4.5 H13.5" fill="none" stroke="#D00000" stroke-width="1" /></svg>
<div class="a " style="left:436px;top:693px;width:2px;height:20px;border-left:1px solid #ACA899;border-right:1px solid #fff"></div>
<svg class="a" style="left:443px;top:695px" width="16" height="16" viewBox="0 0 16 16" shape-rendering="crispEdges"><rect x="0" y="1" width="5" height="1" fill="#000"/><rect x="1" y="3" width="4" height="1" fill="#000"/><rect x="0" y="5" width="5" height="1" fill="#000"/><g shape-rendering="auto"><path d="M2 15 V9 L5 6.5 V9 L8 6.5 V9 L10 7.5 H15.5 V15 Z" fill="#000" stroke="none" stroke-width="1" /><path d="M6 2 L11 7 M11 1.5 L8 5 M9 0.5 L13 4 L12 6" fill="none" stroke="#E00020" stroke-width="1.5" /></g><rect x="4" y="10" width="1" height="5" fill="#fff"/><rect x="7" y="10" width="1" height="5" fill="#fff"/><rect x="11" y="10" width="3" height="1" fill="#808040"/><rect x="11" y="12" width="3" height="1" fill="#808040"/></svg>
<svg class="a" style="left:466px;top:695px" width="16" height="16" viewBox="0 0 16 16" shape-rendering="crispEdges"><path d="M0.5 0.5 H9.5 L13.5 4.5 V14.5 H0.5 Z" fill="#fff" stroke="#000080" stroke-width="1" /><path d="M9.5 0.5 V4.5 H13.5" fill="#D8D8E8" stroke="#000080" stroke-width="1" /><rect x="3" y="9" width="1" height="2" fill="#0000E0"/><rect x="6" y="10" width="1" height="1" fill="#0000E0"/><rect x="8.6" y="7.6" width="2.8" height="2.8" fill="#fff" stroke="#0000E0" stroke-width="1.2"/></svg>
<svg class="a" style="left:489px;top:695px" width="16" height="16" viewBox="0 0 16 16" shape-rendering="crispEdges"><rect x="1" y="1" width="1" height="1" fill="#E00000"/><rect x="1" y="3" width="1" height="1" fill="#E00000"/><rect x="1" y="5" width="1" height="1" fill="#E00000"/><rect x="1" y="7" width="1" height="1" fill="#E00000"/><rect x="1" y="9" width="1" height="1" fill="#E00000"/><rect x="1" y="11" width="1" height="1" fill="#E00000"/><rect x="1" y="13" width="1" height="1" fill="#E00000"/><rect x="1" y="15" width="1" height="1" fill="#E00000"/><rect x="2" y="5" width="1" height="1" fill="#E00000"/><rect x="4" y="5" width="1" height="1" fill="#E00000"/><rect x="6" y="5" width="1" height="1" fill="#E00000"/><rect x="2" y="12" width="1" height="1" fill="#E00000"/><rect x="4" y="12" width="1" height="1" fill="#E00000"/><rect x="6" y="12" width="1" height="1" fill="#E00000"/><rect x="7" y="1" width="9" height="5" fill="#FFFF00"/><rect x="5" y="6" width="11" height="2" fill="#000"/><rect x="7" y="9" width="9" height="5" fill="#FFFF00"/><rect x="5" y="14" width="11" height="1" fill="#000"/><rect x="15" y="1" width="1" height="14" fill="#000"/></svg>
<div class="a " style="left:511px;top:693px;width:2px;height:20px;border-left:1px solid #ACA899;border-right:1px solid #fff"></div>
<svg class="a" style="left:518px;top:695px" width="16" height="16" viewBox="0 0 16 16" shape-rendering="crispEdges"><rect x="0.7" y="0.7" width="14.6" height="13.6" fill="#000" stroke="#B00000" stroke-width="1.4"/><rect x="1" y="1" width="14" height="3" fill="#303080"/><rect x="2" y="1" width="3" height="2" fill="#FF4040"/><rect x="6" y="1" width="3" height="2" fill="#FFFF00"/><rect x="11" y="1" width="3" height="2" fill="#E0E0FF"/><text x="1" y="12.5" font-family="Liberation Sans, sans-serif" font-size="9" fill="#20F020" font-weight="bold" textLength="14" lengthAdjust="spacingAndGlyphs">999</text></svg>
<svg class="a" style="left:541px;top:695px" width="16" height="16" viewBox="0 0 16 16" shape-rendering="crispEdges"><rect x="0.7" y="0.7" width="14.6" height="13.6" fill="#000" stroke="#B00000" stroke-width="1.4"/><rect x="1" y="1" width="14" height="3" fill="#303080"/><rect x="2" y="1" width="3" height="2" fill="#FF4040"/><rect x="6" y="1" width="3" height="2" fill="#FFFF00"/><rect x="11" y="1" width="3" height="2" fill="#E0E0FF"/><text x="1" y="12.5" font-family="Liberation Sans, sans-serif" font-size="9" fill="#20F020" font-weight="bold" textLength="14" lengthAdjust="spacingAndGlyphs">ABC</text></svg>
<svg class="a" style="left:564px;top:695px" width="16" height="16" viewBox="0 0 16 16" shape-rendering="crispEdges"><rect x="0" y="0" width="16" height="1" fill="#D00000"/><rect x="0" y="14" width="16" height="1" fill="#D00000"/><text x="0" y="12.5" font-family="Liberation Serif, serif" font-weight="bold" font-size="13" fill="#E00010">1</text><text x="9.5" y="12.5" font-family="Liberation Serif, serif" font-weight="bold" font-size="13" fill="#E00010">2</text><g shape-rendering="auto"><path d="M8 3 V12 M6.5 4.5 L8 2.5 L9.5 4.5 M6.5 10.5 L8 12.5 L9.5 10.5" fill="none" stroke="#000" stroke-width="1" /></g></svg>
<svg class="a" style="left:587px;top:695px" width="16" height="16" viewBox="0 0 16 16" shape-rendering="crispEdges"><rect x="0.65" y="0.65" width="14.7" height="13.7" fill="#FFFF40" stroke="#000" stroke-width="1.3"/><rect x="2.5" y="2.5" width="11" height="10" fill="#ECE9D8" stroke="#000" stroke-width="1"/><g shape-rendering="auto"><path d="M8 4 V7.5 H12 M8 7.5 L4.5 11" fill="none" stroke="#000" stroke-width="1" /></g></svg>
<div class="a " style="left:609px;top:693px;width:2px;height:20px;border-left:1px solid #ACA899;border-right:1px solid #fff"></div>
<svg class="a" style="left:616px;top:695px" width="16" height="16" viewBox="0 0 16 16" shape-rendering="crispEdges"><g shape-rendering="auto"><polygon points="0.5,3 3,0.5 7,0.5 9.5,3 7,5.5 3,5.5" fill="#0000E0" stroke="none" stroke-width="1"/><polygon points="0,14.5 4,9 8,14.5" fill="#FFFF00" stroke="none" stroke-width="1"/></g><rect x="9" y="5" width="6" height="8" fill="#F00000"/></svg>
<svg class="a" style="left:639px;top:695px" width="16" height="16" viewBox="0 0 16 16" shape-rendering="crispEdges"><rect x="0.65" y="0.65" width="14.7" height="13.7" fill="#fff" stroke="#000080" stroke-width="1.3"/><rect x="1" y="1" width="14" height="3" fill="#000080"/><g shape-rendering="auto"><path d="M4 7 H9 V11 H4 M3 13 L13 5" fill="none" stroke="#A00060" stroke-width="1.1" /><path d="M3 12 L8 8 L13 4" fill="none" stroke="#0060C0" stroke-width="0.8" /></g><text x="8.5" y="14" font-family="Liberation Sans, sans-serif" font-size="7" fill="#20C020" font-weight="bold">6</text></svg>
<div class="a " style="left:665px;top:690px;width:2px;height:28px;border-left:1px solid #ACA899;border-right:1px solid #fff"></div>
<div class="a " style="left:0px;top:718px;width:1366px;height:1px;background:#ACA899"></div>
<div class="a " style="left:0px;top:719px;width:1366px;height:19px;background:#ECE9D8;border-top:1px solid #fff"></div>
<div class="a " style="left:0px;top:721px;width:76px;height:17px;border:1px solid;border-color:#C5C2B2 #fff #fff #C5C2B2"></div>
<div class="a " style="left:78px;top:721px;width:69px;height:17px;border:1px solid;border-color:#C5C2B2 #fff #fff #C5C2B2"></div>
<div class="a " style="left:148px;top:721px;width:1px;height:17px;background:#C5C2B2"></div>
<div class="a " style="left:1201px;top:721px;width:133px;height:17px;border:1px solid;border-color:#ACA899 #fff #fff #ACA899"></div>
<div class="a " style="left:1337px;top:721px;width:29px;height:17px;border:1px solid;border-color:#C5C2B2 #fff #fff #C5C2B2"></div>
<div class="a t " style="left:2px;top:723px;"><span class="l">604, 215</span></div>
<div class="a t " style="left:89px;top:723px;"><span class="l">1108(6%)</span></div>
<div class="a t " style="left:152px;top:723px;">位开关<span class="l">[BS_011](s)  (571,212) - (625,229) </span>选择</div>
<div class="a t " style="left:1205px;top:723px;"><span class="l">AnA(LINK)</span></div>
<div class="a t " style="left:1340px;top:723px;"><span class="l">100%</span></div>
<svg class="a" style="left:1180px;top:721px" width="17" height="14" viewBox="0 0 17 14" shape-rendering="crispEdges" ><path d="M1 10 L3.5 1.5 H15.5 L13.5 10 Z" fill="#000"/><path d="M5.5 3 L4 9 M8 3 L6.5 9 M10.5 3 L9 9" stroke="#fff" stroke-width="1" shape-rendering="auto"/><rect x="10.5" y="3.5" width="3" height="4" fill="#fff" stroke="#000"/><path d="M0 12.5 H16" stroke="#00A" stroke-width="1"/></svg>
<div class="a " style="left:0px;top:738px;width:1366px;height:30px;background:linear-gradient(to bottom,#3168D5 0,#4993E6 2px,#2B71E0 4px,#245DDB 8px,#2663E0 20px,#1F51C2 29px,#1941A5 30px)"></div>
<div class="a " style="left:0px;top:738px;width:97px;height:30px;background:linear-gradient(to bottom,#3F8A3F 0,#6ABA6A 2px,#47A047 6px,#3A913A 14px,#368A36 22px,#2F7A2F 27px,#2A6A2A 30px);border-radius:0 10px 14px 0;box-shadow:inset -2px 0 3px rgba(0,40,0,.5), 2px 0 2px rgba(0,0,80,.3)"></div>
<svg class="a" style="left:11px;top:744px" width="20" height="18" viewBox="0 0 20 18" shape-rendering="crispEdges" ><g shape-rendering="auto"><path d="M1 3 Q5 1 9 3 L8 8 Q4 6 0 8 Z" fill="#E8542C"/><path d="M10.5 3.5 Q14 5.5 18 3 L17 8 Q13 10 9.5 8.5 Z" fill="#7FC241"/><path d="M0 9.5 Q4 7.5 8 9.5 L7 15 Q3 13 -1 15 Z" fill="#4F8FE6"/><path d="M9.2 10 Q13 11.5 16.8 9.5 L16 14.5 Q12 17 8.3 15 Z" fill="#F8C52C"/></g></svg>
<div class="a t sans" style="left:38px;top:743px;color:#fff;font-size:18px;line-height:22px;font-weight:300;text-shadow:1px 1px 1px rgba(0,0,0,.45);transform:skewX(-14deg)">开始</div>
<svg class="a" style="left:110px;top:745px" width="18" height="18" viewBox="0 0 18 18" shape-rendering="crispEdges" ><g shape-rendering="auto"><path d="M4 1 H13 L14 10 H3 Z" fill="#BFD9F7" stroke="#5A7DB8"/><path d="M6 10 L5 16 H12 L11 10 Z" fill="#DDE8F8" stroke="#7088B0"/></g></svg>
<svg class="a" style="left:131px;top:745px" width="18" height="18" viewBox="0 0 18 18" shape-rendering="crispEdges" ><g shape-rendering="auto"><rect x="1" y="2" width="14" height="14" rx="3" fill="#E8F0FF" stroke="#3A62B0"/><circle cx="8" cy="9" r="4" fill="none" stroke="#2A4E9A" stroke-width="2"/><circle cx="14" cy="4" r="2.2" fill="#E04030"/></g></svg>
<svg class="a" style="left:154px;top:745px" width="20" height="18" viewBox="0 0 20 18" shape-rendering="crispEdges" ><g shape-rendering="auto"><circle cx="9" cy="9" r="6" fill="none" stroke="#4DA8F0" stroke-width="3"/><path d="M4 9 H14" stroke="#4DA8F0" stroke-width="2.2"/><path d="M1 14 Q9 -2 18 3" fill="none" stroke="#8CCBF5" stroke-width="1.5"/></g></svg>
<div class="a t sans" style="left:193px;top:741px;color:#D8E4FF;font-size:12px;">»</div>
<div class="a " style="left:208px;top:742px;width:131px;height:23px;border-radius:3px;background:linear-gradient(to bottom,#4E8FF4 0,#3C81F0 3px,#3A7EEE 18px,#3373E2 23px);box-shadow:inset 1px 1px 0 rgba(255,255,255,.18),inset -1px -1px 0 rgba(0,0,80,.25)"></div>
<svg class="a" style="left:218px;top:745px" width="16" height="16" viewBox="0 0 16 16" shape-rendering="crispEdges"><g shape-rendering="auto"><path d="M1 3.5 Q1 2.5 2 2.5 H6 L7.5 4 H13.5 Q14.5 4 14.5 5 V12 Q14.5 13 13.5 13 H2 Q1 13 1 12 Z" fill="#E8B830" stroke="#A87818" stroke-width="0.8" /><path d="M1.2 12 L3 6.5 Q3.3 5.8 4 5.8 H15 Q15.8 5.8 15.5 6.8 L14 12.5 Q13.8 13 13 13 H2 Z" fill="#FFE890" stroke="#C09828" stroke-width="0.8" /></g></svg>
<div class="a t " style="left:237px;top:747px;color:#fff">我的文档</div>
<div class="a " style="left:340px;top:742px;width:131px;height:23px;border-radius:3px;background:linear-gradient(to bottom,#4E8FF4 0,#3C81F0 3px,#3A7EEE 18px,#3373E2 23px);box-shadow:inset 1px 1px 0 rgba(255,255,255,.18),inset -1px -1px 0 rgba(0,0,80,.25)"></div>
<svg class="a" style="left:350px;top:745px" width="16" height="16" viewBox="0 0 16 16" shape-rendering="crispEdges"><g shape-rendering="auto"><circle cx="8" cy="8" r="7.5" fill="#101010" stroke="none" stroke-width="1"/><path d="M8 0.5 A7.5 7.5 0 0 0 2 12.5 L8 8 Z" fill="#C81818" stroke="none" stroke-width="1" /><path d="M8 8 L13 5 L15 9 L11 14 L8 14 Z" fill="#F0F0F0" stroke="none" stroke-width="1" /><path d="M9 8 H12 V11 H9 Z" fill="#806020" stroke="none" stroke-width="1" /><path d="M7 3 L11 2 L10 5 Z" fill="#F0F0F0" stroke="none" stroke-width="1" /></g></svg>
<div class="a t " style="left:369px;top:747px;color:#fff"><span class="l">MELSOFT</span>系列<span class="l">...</span></div>
<div class="a " style="left:471px;top:742px;width:131px;height:23px;border-radius:3px;background:linear-gradient(to bottom,#4E8FF4 0,#3C81F0 3px,#3A7EEE 18px,#3373E2 23px);box-shadow:inset 1px 1px 0 rgba(255,255,255,.18),inset -1px -1px 0 rgba(0,0,80,.25)"></div>
<svg class="a" style="left:481px;top:745px" width="16" height="16" viewBox="0 0 16 16" shape-rendering="crispEdges"><rect x="0" y="0" width="16" height="16" fill="#101070"/><text x="1.5" y="7.5" font-family="Liberation Sans, sans-serif" font-size="8" fill="#fff" font-weight="bold" textLength="13" lengthAdjust="spacingAndGlyphs">GP</text><g shape-rendering="auto"><polygon points="1,15 3,10 6,10 4,15" fill="#F02020" stroke="none" stroke-width="1"/><polygon points="6,15 8,10 11,10 9,15" fill="#20D020" stroke="none" stroke-width="1"/><polygon points="11,15 13,10 16,10 14,15" fill="#C0C0C0" stroke="none" stroke-width="1"/></g></svg>
<div class="a t " style="left:500px;top:747px;color:#fff"><span class="l">1S210240(09...</span></div>
<div class="a " style="left:602px;top:742px;width:131px;height:23px;border-radius:3px;background:linear-gradient(to bottom,#1941A5 0,#1E52B7 3px,#1F55BB 20px,#2560C8 23px);box-shadow:inset 1px 1px 1px #102F7F"></div>
<svg class="a" style="left:612px;top:745px" width="16" height="16" viewBox="0 0 16 16" shape-rendering="crispEdges"><rect x="2.5" y="1.5" width="10" height="9" fill="#fff" stroke="#404040" stroke-width="1"/><g shape-rendering="auto"><path d="M3 10.5 L12 1.5 M5 4 L11 10" fill="none" stroke="#404040" stroke-width="1.2" /><path d="M11 2.5 L14.5 0 L15.5 1 L12.5 4" fill="#207060" stroke="#000" stroke-width="0.6" /><path d="M13 5 V10" fill="none" stroke="#000" stroke-width="1.4" /></g><rect x="0" y="11" width="15" height="2" fill="#B0A030"/><rect x="1" y="13" width="13" height="1" fill="#403810"/><rect x="0" y="10" width="15" height="1" fill="#303010"/></svg>
<div class="a t " style="left:631px;top:747px;color:#fff">画板<span class="l"> - 1S21...</span></div>
<div class="a " style="left:734px;top:742px;width:131px;height:23px;border-radius:3px;background:linear-gradient(to bottom,#4E8FF4 0,#3C81F0 3px,#3A7EEE 18px,#3373E2 23px);box-shadow:inset 1px 1px 0 rgba(255,255,255,.18),inset -1px -1px 0 rgba(0,0,80,.25)"></div>
<svg class="a" style="left:744px;top:745px" width="16" height="16" viewBox="0 0 16 16" shape-rendering="crispEdges"><g shape-rendering="auto"><path d="M1 3.5 Q1 2.5 2 2.5 H6 L7.5 4 H13.5 Q14.5 4 14.5 5 V12 Q14.5 13 13.5 13 H2 Q1 13 1 12 Z" fill="#E8B830" stroke="#A87818" stroke-width="0.8" /><path d="M1.2 12 L3 6.5 Q3.3 5.8 4 5.8 H15 Q15.8 5.8 15.5 6.8 L14 12.5 Q13.8 13 13 13 H2 Z" fill="#FFE890" stroke="#C09828" stroke-width="0.8" /></g></svg>
<div class="a t " style="left:763px;top:747px;color:#fff"><span class="l">3-1</span></div>
<div class="a " style="left:866px;top:742px;width:131px;height:23px;border-radius:3px;background:linear-gradient(to bottom,#4E8FF4 0,#3C81F0 3px,#3A7EEE 18px,#3373E2 23px);box-shadow:inset 1px 1px 0 rgba(255,255,255,.18),inset -1px -1px 0 rgba(0,0,80,.25)"></div>
<svg class="a" style="left:876px;top:745px" width="16" height="16" viewBox="0 0 16 16" shape-rendering="crispEdges"><rect x="0.7" y="0.7" width="13.6" height="13.6" fill="#F4F4FF" stroke="#3858B0" stroke-width="1.4"/><g shape-rendering="auto"><path d="M2 13 Q5 11 9 6 T14 1.5" fill="none" stroke="#F0B020" stroke-width="2.6" /><path d="M2 9 Q6 7 9 2" fill="none" stroke="#3060D0" stroke-width="1.6" /><path d="M7 13.5 Q11 12 14 7" fill="none" stroke="#E8E8F0" stroke-width="2" /></g></svg>
<div class="a t " style="left:895px;top:747px;color:#fff"><span class="l">1S210251 IO...</span></div>
<div class="a " style="left:998px;top:742px;width:131px;height:23px;border-radius:3px;background:linear-gradient(to bottom,#4E8FF4 0,#3C81F0 3px,#3A7EEE 18px,#3373E2 23px);box-shadow:inset 1px 1px 0 rgba(255,255,255,.18),inset -1px -1px 0 rgba(0,0,80,.25)"></div>
<svg class="a" style="left:1008px;top:745px" width="16" height="16" viewBox="0 0 16 16" shape-rendering="crispEdges"><g shape-rendering="auto"><path d="M3 1 H13 Q14 1 14 2 V14 Q14 15.5 12.5 15.5 H3.5 Q2 15.5 2 14 V2 Q2 1 3 1 Z" fill="#B8C4DC" stroke="#6878A0" stroke-width="0.9" /></g><rect x="4" y="2" width="8" height="3" fill="#E8F0F8"/><rect x="4" y="7" width="2" height="2" fill="#8090B8"/><rect x="4" y="10" width="2" height="2" fill="#8090B8"/><rect x="4" y="13" width="2" height="2" fill="#8090B8"/><rect x="7" y="7" width="2" height="2" fill="#8090B8"/><rect x="7" y="10" width="2" height="2" fill="#8090B8"/><rect x="7" y="13" width="2" height="2" fill="#8090B8"/><rect x="10" y="7" width="2" height="2" fill="#8090B8"/><rect x="10" y="10" width="2" height="2" fill="#8090B8"/><rect x="10" y="13" width="2" height="2" fill="#8090B8"/></svg>
<div class="a t " style="left:1027px;top:747px;color:#fff">计算器</div>
<div class="a " style="left:1130px;top:742px;width:131px;height:23px;border-radius:3px;background:linear-gradient(to bottom,#4E8FF4 0,#3C81F0 3px,#3A7EEE 18px,#3373E2 23px);box-shadow:inset 1px 1px 0 rgba(255,255,255,.18),inset -1px -1px 0 rgba(0,0,80,.25)"></div>
<svg class="a" style="left:1140px;top:745px" width="16" height="16" viewBox="0 0 16 16" shape-rendering="crispEdges"><g shape-rendering="auto"><path d="M4 8 H13 L12 15 Q8.5 16.5 5 15 Z" fill="#D8D8E0" stroke="#606070" stroke-width="0.8" /><path d="M5 8 L2 0.5 L4 0.5 L7 8 Z" fill="#E03020" stroke="none" stroke-width="1" /><path d="M7.5 8 L7 0 H9 L9.5 8 Z" fill="#E8C020" stroke="none" stroke-width="1" /><path d="M10 8 L12 0.5 L14 1 L12.5 8 Z" fill="#30A030" stroke="none" stroke-width="1" /><path d="M6 8 L5.5 2 L7 2 Z" fill="#3050D0" stroke="none" stroke-width="1" /><path d="M6 11 H11 V13 H6 Z" fill="#E04040" stroke="none" stroke-width="1" /></g></svg>
<div class="a t " style="left:1159px;top:747px;color:#fff"><span class="l">4 - </span>画图</div>
<svg class="a" style="left:1270px;top:745px" width="18" height="16" viewBox="0 0 18 16" shape-rendering="crispEdges" ><rect x="0.5" y="3.5" width="17" height="9" fill="#fff" stroke="#000" stroke-width="1"/><rect x="2" y="5" width="1" height="2" fill="#000"/><rect x="4" y="5" width="1" height="2" fill="#000"/><rect x="6" y="5" width="1" height="2" fill="#000"/><rect x="8" y="5" width="1" height="2" fill="#000"/><rect x="10" y="5" width="1" height="2" fill="#000"/><rect x="12" y="5" width="1" height="2" fill="#000"/><rect x="14" y="5" width="1" height="2" fill="#000"/><rect x="2" y="8" width="1" height="2" fill="#000"/><rect x="4" y="8" width="1" height="2" fill="#000"/><rect x="6" y="8" width="1" height="2" fill="#000"/><rect x="8" y="8" width="1" height="2" fill="#000"/><rect x="10" y="8" width="1" height="2" fill="#000"/><rect x="12" y="8" width="1" height="2" fill="#000"/><rect x="14" y="8" width="1" height="2" fill="#000"/><rect x="4" y="11" width="10" height="1" fill="#000"/><polyline points="9,3 9,1 13,0" fill="none" stroke="#000" stroke-width="1" /></svg>
<div class="a " style="left:1306px;top:738px;width:60px;height:30px;background:linear-gradient(to bottom,#1290E9 0,#19B9F3 2px,#129FEA 5px,#0F8EE4 20px,#0D7FD6 28px,#0A5FB0 30px);border-left:1px solid #0A5FB0;box-shadow:inset 1px 0 0 #3FC0F5"></div>
<svg class="a" style="left:1297px;top:744px" width="20" height="20" viewBox="0 0 20 20" shape-rendering="crispEdges" ><g shape-rendering="auto"><circle cx="10" cy="10" r="9" fill="#3C8CF0" stroke="#9CCBFA" stroke-width="1"/><circle cx="10" cy="10" r="7" fill="#2A6FE0"/><path d="M12 5.5 L7.5 10 L12 14.5" fill="none" stroke="#fff" stroke-width="2.4"/></g></svg>
<div class="a t " style="left:1323px;top:746px;color:#fff"><span class="l">22:17</span></div>
<div class="a " style="left:688px;top:298px;width:469px;height:416px;background:#0A26A6;border-radius:8px 8px 0 0"></div>
<div class="a " style="left:688px;top:298px;width:469px;height:29px;border-radius:8px 8px 0 0;background:linear-gradient(to bottom,#0A5FE8 0,#2878F2 2px,#1265EC 4px,#0054E0 8px,#0050DC 14px,#0458E8 20px,#0A60F2 24px,#0656E2 26px,#0040C4 28px,#0036B0 29px)"></div>
<div class="a " style="left:688px;top:327px;width:3px;height:387px;background:linear-gradient(to right,#0A2496 0,#0A2496 1px,#2A5CE8 1px,#2A5CE8 2px,#1A48BC 2px)"></div>
<div class="a " style="left:1154px;top:327px;width:3px;height:387px;background:linear-gradient(to right,#0A30B4 0,#0A30B4 1px,#06269A 1px,#06269A 2px,#0A2C88 2px)"></div>
<div class="a " style="left:691px;top:327px;width:463px;height:384px;background:#ECE9D8;border:1px solid #F4F7FB;border-top:none"></div>
<div class="a t ttl ttl2" style="left:696px;top:307px;color:#fff;font-size:13px;font-weight:bold;text-shadow:1px 1px 0 #0A2A8C">位开关设置<span class="l">[BS_011]</span></div>
<div class="a " style="left:1131px;top:303px;width:21px;height:21px;border:1px solid #fff;border-radius:3px;background:linear-gradient(135deg,#EB9075,#D6532E 50%,#B83A18)"></div>
<svg class="a" style="left:1131px;top:303px" width="21" height="21" viewBox="0 0 21 21" shape-rendering="crispEdges" ><path d="M6 6 L15 15 M15 6 L6 15" stroke="#fff" stroke-width="2.4" fill="none" shape-rendering="auto"/></svg>
<div class="a " style="left:697px;top:352px;width:451px;height:326px;border:1px solid;border-color:#fff #716F64 #716F64 #fff;box-shadow:inset -1px -1px 0 #ACA899"></div>
<div class="a " style="left:760px;top:334px;width:64px;height:18px;background:#ECE9D8;border:1px solid;border-color:#fff #716F64 transparent #fff;border-radius:3px 3px 0 0;box-shadow:inset -1px 0 0 #ACA899"></div>
<div class="a t " style="left:765px;top:338px;">形状<span class="l">/</span>颜色</div>
<div class="a " style="left:824px;top:334px;width:48px;height:18px;background:#ECE9D8;border:1px solid;border-color:#fff #716F64 transparent #fff;border-radius:3px 3px 0 0;box-shadow:inset -1px 0 0 #ACA899"></div>
<div class="a t " style="left:829px;top:338px;">标签</div>
<div class="a " style="left:872px;top:334px;width:48px;height:18px;background:#ECE9D8;border:1px solid;border-color:#fff #716F64 transparent #fff;border-radius:3px 3px 0 0;box-shadow:inset -1px 0 0 #ACA899"></div>
<div class="a t " style="left:877px;top:338px;">扩展</div>
<div class="a " style="left:698px;top:332px;width:63px;height:21px;background:#ECE9D8;border:1px solid;border-color:#fff #716F64 transparent #fff;border-radius:3px 3px 0 0;box-shadow:inset -1px 0 0 #ACA899"></div>
<div class="a t " style="left:705px;top:336px;">一般设置</div>
<div class="a t " style="left:715px;top:359px;">描述</div>
<div class="a sunk" style="left:716px;top:377px;width:112px;height:18px;"></div>
<div class="a " style="left:719px;top:380px;width:1px;height:12px;background:#000"></div>
<div class="a t " style="left:716px;top:404px;">状态</div>
<div class="a btn" style="left:748px;top:401px;width:25px;height:18px;"></div>
<div class="a t " style="left:754px;top:403px;">开</div>
<div class="a " style="left:773px;top:401px;width:27px;height:18px;border:1px solid;border-color:#716F64 #fff #fff #716F64;background:#F3F1E8"></div>
<div class="a t " style="left:780px;top:404px;">关</div>
<div class="a " style="left:714px;top:424px;width:88px;height:68px;border:1px solid;border-color:#716F64 #fff #fff #716F64;background:#000"></div>
<div class="a " style="left:732px;top:450px;width:52px;height:2px;background:#fff"></div>
<div class="a " style="left:732px;top:450px;width:2px;height:18px;background:#fff"></div>
<div class="a btn" style="left:715px;top:495px;width:81px;height:21px;"></div>
<div class="a t " style="left:734px;top:500px;">浏览<span class="l">...</span></div>
<div class="a t " style="left:878px;top:359px;">运算位地址</div>
<div class="a btn" style="left:878px;top:375px;width:19px;height:19px;"></div>
<svg class="a" style="left:880px;top:377px" width="15" height="15" viewBox="0 0 15 15" shape-rendering="crispEdges" ><rect x="1" y="7" width="12" height="7" fill="#000"/><rect x="2" y="8" width="10" height="5" fill="#fff"/><rect x="3" y="9" width="3" height="3" fill="#000"/><path d="M9 3 V9 M6.5 7 L9 10 L11.5 7" stroke="#F00" stroke-width="2" fill="none"/><text x="0" y="6" font-family="Liberation Sans" font-size="6.5" font-weight="bold" fill="#000" textLength="13" lengthAdjust="spacingAndGlyphs">ADR</text></svg>
<div class="a sunk" style="left:900px;top:376px;width:105px;height:19px;"></div>
<div class="a t " style="left:902px;top:379px;"><span class="l">LS017902</span></div>
<div class="a btn" style="left:987px;top:378px;width:16px;height:15px;"></div>
<svg class="a" style="left:991px;top:383px" width="7" height="4" viewBox="0 0 7 4" shape-rendering="crispEdges" ><polygon points="0,0 7,0 3.5,4" fill="#000" stroke="none" stroke-width="1"/></svg>
<div class="a " style="left:1010px;top:375px;width:23px;height:21px;background:#8C8CA4;border:1px solid;border-color:#C8C8E0 #20206C #20206C #C8C8E0;box-shadow:inset -1px -1px 0 #404080"></div>
<svg class="a" style="left:1012px;top:377px" width="19" height="17" viewBox="0 0 19 17" shape-rendering="crispEdges" ><rect x="2" y="1" width="14" height="3" fill="#78C8C8"/><rect x="2" y="1" width="14" height="1" fill="#404060"/><rect x="2" y="6" width="3" height="3" fill="#30304C"/><rect x="2" y="6" width="2" height="2" fill="#D8D8E8"/><rect x="3" y="7" width="1" height="1" fill="#8C8CA4"/><rect x="2" y="10" width="3" height="3" fill="#30304C"/><rect x="2" y="10" width="2" height="2" fill="#D8D8E8"/><rect x="3" y="11" width="1" height="1" fill="#8C8CA4"/><rect x="2" y="14" width="3" height="3" fill="#30304C"/><rect x="2" y="14" width="2" height="2" fill="#D8D8E8"/><rect x="3" y="15" width="1" height="1" fill="#8C8CA4"/><rect x="6" y="6" width="3" height="3" fill="#30304C"/><rect x="6" y="6" width="2" height="2" fill="#D8D8E8"/><rect x="7" y="7" width="1" height="1" fill="#8C8CA4"/><rect x="6" y="10" width="3" height="3" fill="#30304C"/><rect x="6" y="10" width="2" height="2" fill="#D8D8E8"/><rect x="7" y="11" width="1" height="1" fill="#8C8CA4"/><rect x="6" y="14" width="3" height="3" fill="#30304C"/><rect x="6" y="14" width="2" height="2" fill="#D8D8E8"/><rect x="7" y="15" width="1" height="1" fill="#8C8CA4"/><rect x="10" y="6" width="3" height="3" fill="#30304C"/><rect x="10" y="6" width="2" height="2" fill="#D8D8E8"/><rect x="11" y="7" width="1" height="1" fill="#8C8CA4"/><rect x="10" y="10" width="3" height="3" fill="#30304C"/><rect x="10" y="10" width="2" height="2" fill="#D8D8E8"/><rect x="11" y="11" width="1" height="1" fill="#8C8CA4"/><rect x="10" y="14" width="3" height="3" fill="#30304C"/><rect x="10" y="14" width="2" height="2" fill="#D8D8E8"/><rect x="11" y="15" width="1" height="1" fill="#8C8CA4"/><rect x="14" y="6" width="3" height="3" fill="#30304C"/><rect x="14" y="6" width="2" height="2" fill="#D8D8E8"/><rect x="15" y="7" width="1" height="1" fill="#8C8CA4"/><rect x="14" y="10" width="3" height="3" fill="#30304C"/><rect x="14" y="10" width="2" height="2" fill="#D8D8E8"/><rect x="15" y="11" width="1" height="1" fill="#8C8CA4"/><rect x="14" y="14" width="3" height="3" fill="#30304C"/><rect x="14" y="14" width="2" height="2" fill="#D8D8E8"/><rect x="15" y="15" width="1" height="1" fill="#8C8CA4"/></svg>
<div class="a " style="left:879px;top:406px;width:13px;height:13px;border:1px solid;border-color:#716F64 #fff #fff #716F64;background:#fff;box-shadow:inset 1px 1px 0 #404040"></div>
<svg class="a" style="left:880px;top:408px" width="9" height="9" viewBox="0 0 9 9" shape-rendering="crispEdges" ><path d="M1 3.5 L3.5 6 L8 1.5" stroke="#000" stroke-width="2" fill="none" shape-rendering="auto"/></svg>
<div class="a t " style="left:896px;top:407px;">监控</div>
<div class="a t " style="left:878px;top:423px;">监控位地址</div>
<div class="a btn" style="left:878px;top:440px;width:19px;height:19px;"></div>
<svg class="a" style="left:880px;top:442px" width="15" height="15" viewBox="0 0 15 15" shape-rendering="crispEdges" ><rect x="1" y="7" width="12" height="7" fill="#000"/><rect x="2" y="8" width="10" height="5" fill="#fff"/><rect x="3" y="9" width="3" height="3" fill="#000"/><path d="M9 3 V9 M6.5 7 L9 10 L11.5 7" stroke="#F00" stroke-width="2" fill="none"/><text x="0" y="6" font-family="Liberation Sans" font-size="6.5" font-weight="bold" fill="#000" textLength="13" lengthAdjust="spacingAndGlyphs">ADR</text></svg>
<div class="a sunk" style="left:900px;top:441px;width:105px;height:19px;"></div>
<div class="a t " style="left:902px;top:444px;"><span class="l">LS018002</span></div>
<div class="a btn" style="left:987px;top:443px;width:16px;height:15px;"></div>
<svg class="a" style="left:991px;top:448px" width="7" height="4" viewBox="0 0 7 4" shape-rendering="crispEdges" ><polygon points="0,0 7,0 3.5,4" fill="#000" stroke="none" stroke-width="1"/></svg>
<div class="a " style="left:1010px;top:440px;width:23px;height:21px;background:#8C8CA4;border:1px solid;border-color:#C8C8E0 #20206C #20206C #C8C8E0;box-shadow:inset -1px -1px 0 #404080"></div>
<svg class="a" style="left:1012px;top:442px" width="19" height="17" viewBox="0 0 19 17" shape-rendering="crispEdges" ><rect x="2" y="1" width="14" height="3" fill="#78C8C8"/><rect x="2" y="1" width="14" height="1" fill="#404060"/><rect x="2" y="6" width="3" height="3" fill="#30304C"/><rect x="2" y="6" width="2" height="2" fill="#D8D8E8"/><rect x="3" y="7" width="1" height="1" fill="#8C8CA4"/><rect x="2" y="10" width="3" height="3" fill="#30304C"/><rect x="2" y="10" width="2" height="2" fill="#D8D8E8"/><rect x="3" y="11" width="1" height="1" fill="#8C8CA4"/><rect x="2" y="14" width="3" height="3" fill="#30304C"/><rect x="2" y="14" width="2" height="2" fill="#D8D8E8"/><rect x="3" y="15" width="1" height="1" fill="#8C8CA4"/><rect x="6" y="6" width="3" height="3" fill="#30304C"/><rect x="6" y="6" width="2" height="2" fill="#D8D8E8"/><rect x="7" y="7" width="1" height="1" fill="#8C8CA4"/><rect x="6" y="10" width="3" height="3" fill="#30304C"/><rect x="6" y="10" width="2" height="2" fill="#D8D8E8"/><rect x="7" y="11" width="1" height="1" fill="#8C8CA4"/><rect x="6" y="14" width="3" height="3" fill="#30304C"/><rect x="6" y="14" width="2" height="2" fill="#D8D8E8"/><rect x="7" y="15" width="1" height="1" fill="#8C8CA4"/><rect x="10" y="6" width="3" height="3" fill="#30304C"/><rect x="10" y="6" width="2" height="2" fill="#D8D8E8"/><rect x="11" y="7" width="1" height="1" fill="#8C8CA4"/><rect x="10" y="10" width="3" height="3" fill="#30304C"/><rect x="10" y="10" width="2" height="2" fill="#D8D8E8"/><rect x="11" y="11" width="1" height="1" fill="#8C8CA4"/><rect x="10" y="14" width="3" height="3" fill="#30304C"/><rect x="10" y="14" width="2" height="2" fill="#D8D8E8"/><rect x="11" y="15" width="1" height="1" fill="#8C8CA4"/><rect x="14" y="6" width="3" height="3" fill="#30304C"/><rect x="14" y="6" width="2" height="2" fill="#D8D8E8"/><rect x="15" y="7" width="1" height="1" fill="#8C8CA4"/><rect x="14" y="10" width="3" height="3" fill="#30304C"/><rect x="14" y="10" width="2" height="2" fill="#D8D8E8"/><rect x="15" y="11" width="1" height="1" fill="#8C8CA4"/><rect x="14" y="14" width="3" height="3" fill="#30304C"/><rect x="14" y="14" width="2" height="2" fill="#D8D8E8"/><rect x="15" y="15" width="1" height="1" fill="#8C8CA4"/></svg>
<div class="a " style="left:877px;top:476px;width:125px;height:89px;border:1px solid #B8B5A2;box-shadow:inset 1px 1px 0 #fff, 1px 1px 0 #fff"></div>
<div class="a t " style="left:883px;top:470px;background:#ECE9D8;padding:0 2px">功能</div>
<div class="a" style="left:890px;top:487px;width:12px;height:12px;border-radius:50%;background:#fff;border:1px solid;border-color:#716F64 #fff #fff #716F64;box-shadow:inset 1px 1px 1px #888"></div>
<div class="a t " style="left:907px;top:487px;">位设置</div>
<div class="a" style="left:890px;top:507px;width:12px;height:12px;border-radius:50%;background:#fff;border:1px solid;border-color:#716F64 #fff #fff #716F64;box-shadow:inset 1px 1px 1px #888"></div>
<div class="a t " style="left:907px;top:507px;">复位</div>
<div class="a" style="left:890px;top:526px;width:12px;height:12px;border-radius:50%;background:#fff;border:1px solid;border-color:#716F64 #fff #fff #716F64;box-shadow:inset 1px 1px 1px #888"></div>
<div class="a" style="left:894px;top:530px;width:4px;height:4px;border-radius:50%;background:#000"></div>
<div class="a t " style="left:907px;top:526px;">瞬间</div>
<div class="a" style="left:890px;top:546px;width:12px;height:12px;border-radius:50%;background:#fff;border:1px solid;border-color:#716F64 #fff #fff #716F64;box-shadow:inset 1px 1px 1px #888"></div>
<div class="a t " style="left:907px;top:546px;">位反转</div>
<div class="a " style="left:808px;top:684px;width:75px;height:21px;border:1px solid #000;background:#ECE9D8"></div>
<div class="a btn" style="left:809px;top:685px;width:73px;height:19px;"></div>
<div class="a t " style="left:834px;top:688px;">确定</div>
<div class="a btn" style="left:889px;top:684px;width:75px;height:21px;"></div>
<div class="a t " style="left:914px;top:688px;">取消</div>
<div class="a btn" style="left:970px;top:684px;width:75px;height:21px;"></div>
<div class="a t " style="left:995px;top:688px;">帮助</div>
</body></html>
